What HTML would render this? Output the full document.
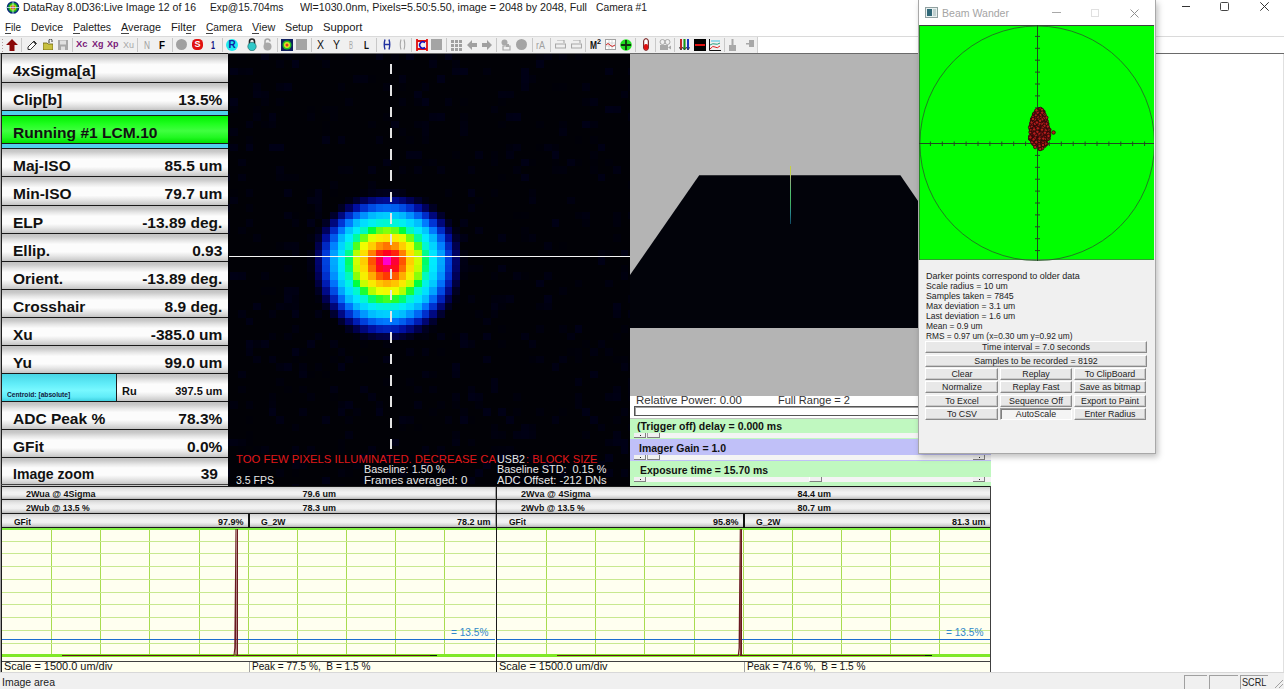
<!DOCTYPE html><html><head><meta charset="utf-8"><style>
html,body{margin:0;padding:0;}
body{width:1284px;height:689px;overflow:hidden;position:relative;background:#fff;font-family:"Liberation Sans",sans-serif;}
div,span,svg{box-sizing:border-box;}
.btn{position:absolute;left:2px;width:226px;background:linear-gradient(to bottom,#c2c2c2 0%,#cacaca 10%,#e8e8e8 25%,#fcfcfc 38%,#fcfcfc 66%,#e8e8e8 80%,#d4d4d4 92%,#c4c4c4 100%);}
.sbtn{position:absolute;background:linear-gradient(to bottom,#d0d0d0 0%,#e4e4e4 20%,#f2f2f2 45%,#f0f0f0 65%,#d8d8d8 85%,#b4b4b4 100%);}
.wb{position:absolute;background:#e6e6e6;border:1px solid #adadad;box-shadow:inset -1px -1px 0 #a0a0a0, inset 1px 1px 0 #fff;}
</style></head><body>

<svg style="position:absolute;left:6px;top:1px" width="14" height="13" viewBox="0 0 14 13">
<circle cx="7" cy="6.5" r="6.3" fill="#0a2a7a"/><circle cx="7" cy="6.5" r="4.8" fill="#18b020"/><circle cx="7" cy="6.5" r="3.2" fill="#a8e010"/><circle cx="7" cy="6.5" r="1.9" fill="#e02020"/>
<line x1="7" y1="0" x2="7" y2="13" stroke="#d0e8ff" stroke-width="0.8"/><line x1="0.5" y1="6.5" x2="13.5" y2="6.5" stroke="#d0e8ff" stroke-width="0.8"/></svg>
<span id="t_1" style="position:absolute;white-space:pre;line-height:10.5px;font-family:'Liberation Sans',sans-serif;font-size:10.5px;font-weight:normal;color:#1a1a1a;top:1.91px;left:23.00px;transform:scaleX(1.0013);transform-origin:left;">DataRay 8.0D36:Live Image 12 of 16</span>
<span id="t_2" style="position:absolute;white-space:pre;line-height:10.5px;font-family:'Liberation Sans',sans-serif;font-size:10.5px;font-weight:normal;color:#1a1a1a;top:1.91px;left:209.50px;transform:scaleX(0.9816);transform-origin:left;">Exp@15.704ms</span>
<span id="t_3" style="position:absolute;white-space:pre;line-height:10.5px;font-family:'Liberation Sans',sans-serif;font-size:10.5px;font-weight:normal;color:#1a1a1a;top:1.91px;left:300.00px;transform:scaleX(1.0190);transform-origin:left;">Wl=1030.0nm, Pixels=5.50:5.50, image = 2048 by 2048, Full</span>
<span id="t_4" style="position:absolute;white-space:pre;line-height:10.5px;font-family:'Liberation Sans',sans-serif;font-size:10.5px;font-weight:normal;color:#1a1a1a;top:1.91px;left:596.00px;transform:scaleX(0.9817);transform-origin:left;">Camera #1</span>
<div style="position:absolute;left:1182px;top:6px;width:8px;height:1px;background:#333;"></div>
<div style="position:absolute;left:1220px;top:2px;width:9px;height:9px;border:1px solid #444;border-radius:1.5px"></div>
<svg style="position:absolute;left:1260px;top:2px" width="9" height="9" viewBox="0 0 9 9"><path d="M0.3 0.3L8.7 8.7M8.7 0.3L0.3 8.7" stroke="#333" stroke-width="1"/></svg>
<span id="t_5" style="position:absolute;white-space:pre;line-height:11px;font-family:'Liberation Sans',sans-serif;font-size:11px;font-weight:normal;color:#1a1a1a;top:22.29px;left:5.00px;transform:scaleX(0.9022);transform-origin:left;">File</span>
<span id="t_6" style="position:absolute;white-space:pre;line-height:11px;font-family:'Liberation Sans',sans-serif;font-size:11px;font-weight:normal;color:#1a1a1a;top:22.29px;left:31.00px;transform:scaleX(0.9517);transform-origin:left;">Device</span>
<span id="t_7" style="position:absolute;white-space:pre;line-height:11px;font-family:'Liberation Sans',sans-serif;font-size:11px;font-weight:normal;color:#1a1a1a;top:22.29px;left:73.00px;transform:scaleX(0.9560);transform-origin:left;">Palettes</span>
<span id="t_8" style="position:absolute;white-space:pre;line-height:11px;font-family:'Liberation Sans',sans-serif;font-size:11px;font-weight:normal;color:#1a1a1a;top:22.29px;left:121.00px;transform:scaleX(0.9808);transform-origin:left;">Average</span>
<span id="t_9" style="position:absolute;white-space:pre;line-height:11px;font-family:'Liberation Sans',sans-serif;font-size:11px;font-weight:normal;color:#1a1a1a;top:22.29px;left:171.00px;transform:scaleX(1.0224);transform-origin:left;">Filter</span>
<span id="t_10" style="position:absolute;white-space:pre;line-height:11px;font-family:'Liberation Sans',sans-serif;font-size:11px;font-weight:normal;color:#1a1a1a;top:22.29px;left:205.60px;transform:scaleX(0.9227);transform-origin:left;">Camera</span>
<span id="t_11" style="position:absolute;white-space:pre;line-height:11px;font-family:'Liberation Sans',sans-serif;font-size:11px;font-weight:normal;color:#1a1a1a;top:22.29px;left:251.50px;transform:scaleX(0.9849);transform-origin:left;">View</span>
<span id="t_12" style="position:absolute;white-space:pre;line-height:11px;font-family:'Liberation Sans',sans-serif;font-size:11px;font-weight:normal;color:#1a1a1a;top:22.29px;left:284.50px;transform:scaleX(0.9739);transform-origin:left;">Setup</span>
<span id="t_13" style="position:absolute;white-space:pre;line-height:11px;font-family:'Liberation Sans',sans-serif;font-size:11px;font-weight:normal;color:#1a1a1a;top:22.29px;left:322.50px;transform:scaleX(1.0251);transform-origin:left;">Support</span>
<div style="position:absolute;left:5px;top:33px;width:6px;height:1px;background:#444;"></div>
<div style="position:absolute;left:73px;top:33px;width:7px;height:1px;background:#444;"></div>
<div style="position:absolute;left:121px;top:33px;width:8px;height:1px;background:#444;"></div>
<div style="position:absolute;left:186px;top:33px;width:5px;height:1px;background:#444;"></div>
<div style="position:absolute;left:205.6px;top:33px;width:7px;height:1px;background:#444;"></div>
<div style="position:absolute;left:251.5px;top:33px;width:7px;height:1px;background:#444;"></div>
<div style="position:absolute;left:0px;top:36px;width:1284px;height:1px;background:#dadada;"></div>
<div style="position:absolute;left:0px;top:37px;width:758px;height:16px;background:#f0f0f0;"></div>
<div style="position:absolute;left:757px;top:37px;width:1px;height:16px;background:#d0d0d0;"></div>
<div style="position:absolute;left:0px;top:53px;width:1284px;height:1px;background:#6a6a6a;"></div>
<div style="position:absolute;left:2px;top:39px;width:1px;height:1px;background:#b0a0a0;"></div>
<div style="position:absolute;left:2px;top:42px;width:1px;height:1px;background:#b0a0a0;"></div>
<div style="position:absolute;left:2px;top:45px;width:1px;height:1px;background:#b0a0a0;"></div>
<div style="position:absolute;left:2px;top:48px;width:1px;height:1px;background:#b0a0a0;"></div>
<div style="position:absolute;left:2px;top:51px;width:1px;height:1px;background:#b0a0a0;"></div>
<div style="position:absolute;left:21px;top:38px;width:1px;height:14px;background:#c8c8c8;"></div>
<div style="position:absolute;left:72px;top:38px;width:1px;height:14px;background:#c8c8c8;"></div>
<div style="position:absolute;left:137px;top:38px;width:1px;height:14px;background:#c8c8c8;"></div>
<div style="position:absolute;left:172px;top:38px;width:1px;height:14px;background:#c8c8c8;"></div>
<div style="position:absolute;left:222px;top:38px;width:1px;height:14px;background:#c8c8c8;"></div>
<div style="position:absolute;left:277px;top:38px;width:1px;height:14px;background:#c8c8c8;"></div>
<div style="position:absolute;left:311px;top:38px;width:1px;height:14px;background:#c8c8c8;"></div>
<div style="position:absolute;left:376px;top:38px;width:1px;height:14px;background:#c8c8c8;"></div>
<div style="position:absolute;left:411px;top:38px;width:1px;height:14px;background:#c8c8c8;"></div>
<div style="position:absolute;left:446px;top:38px;width:1px;height:14px;background:#c8c8c8;"></div>
<div style="position:absolute;left:496px;top:38px;width:1px;height:14px;background:#c8c8c8;"></div>
<div style="position:absolute;left:532px;top:38px;width:1px;height:14px;background:#c8c8c8;"></div>
<div style="position:absolute;left:550px;top:38px;width:1px;height:14px;background:#c8c8c8;"></div>
<div style="position:absolute;left:585px;top:38px;width:1px;height:14px;background:#c8c8c8;"></div>
<div style="position:absolute;left:635px;top:38px;width:1px;height:14px;background:#c8c8c8;"></div>
<div style="position:absolute;left:655px;top:38px;width:1px;height:14px;background:#c8c8c8;"></div>
<div style="position:absolute;left:674px;top:38px;width:1px;height:14px;background:#c8c8c8;"></div>
<div style="position:absolute;left:724px;top:38px;width:1px;height:14px;background:#c8c8c8;"></div>
<svg style="position:absolute;left:6px;top:39px" width="12" height="12" viewBox="0 0 12 12"><path d="M6 0L12 6H8.5V12H3.5V6H0Z" fill="#8a0a0a"/></svg>
<svg style="position:absolute;left:27px;top:40px" width="10" height="10" viewBox="0 0 10 10"><path d="M1 7L7 1L9.5 3.5L3.5 9.5H1Z" fill="#fff" stroke="#333" stroke-width="1"/><path d="M6 2L8.5 4.5L9.5 3.5L7 1Z" fill="#333"/></svg>
<svg style="position:absolute;left:43px;top:39px" width="10" height="11" viewBox="0 0 10 11"><path d="M0 4H4L5 5H10V11H0Z" fill="#c8c040" stroke="#6a6010" stroke-width="0.8"/><path d="M6 4V1.5A1.5 1.5 0 0 1 9 1.5V3" fill="none" stroke="#333" stroke-width="1"/></svg>
<svg style="position:absolute;left:58px;top:40px" width="10" height="10" viewBox="0 0 10 10"><rect x="0" y="0" width="10" height="10" fill="#a8a8a8"/><rect x="2" y="0.5" width="6" height="4" fill="#e0e0e0"/><rect x="3" y="6.5" width="4" height="3.5" fill="#e0e0e0"/></svg>
<span id="t_14" style="position:absolute;white-space:pre;line-height:9px;font-family:'Liberation Sans',sans-serif;font-size:9px;font-weight:bold;color:#7a1878;top:40.18px;left:76.00px;transform:scaleX(1.0440);transform-origin:left;">Xc</span>
<span id="t_15" style="position:absolute;white-space:pre;line-height:9px;font-family:'Liberation Sans',sans-serif;font-size:9px;font-weight:bold;color:#7a1878;top:40.18px;left:91.50px;transform:scaleX(0.9986);transform-origin:left;">Xg</span>
<span id="t_16" style="position:absolute;white-space:pre;line-height:9px;font-family:'Liberation Sans',sans-serif;font-size:9px;font-weight:bold;color:#7a1878;top:40.18px;left:107.00px;transform:scaleX(0.9986);transform-origin:left;">Xp</span>
<span id="t_17" style="position:absolute;white-space:pre;line-height:9.5px;font-family:'Liberation Sans',sans-serif;font-size:9.5px;font-weight:normal;color:#a8a8a8;top:39.76px;left:123.00px;transform:scaleX(0.9462);transform-origin:left;">Xu</span>
<span id="t_18" style="position:absolute;white-space:pre;line-height:11px;font-family:'Liberation Sans',sans-serif;font-size:11px;font-weight:normal;color:#a0a0a0;top:40.19px;left:144.00px;transform:scaleX(0.7544);transform-origin:left;">N</span>
<span id="t_19" style="position:absolute;white-space:pre;line-height:11px;font-family:'Liberation Sans',sans-serif;font-size:11px;font-weight:bold;color:#000;top:40.19px;left:159.00px;transform:scaleX(0.8910);transform-origin:left;">F</span>
<div style="position:absolute;left:176px;top:39px;width:11px;height:11px;border-radius:50%;background:#a0a0a0"></div>
<div style="position:absolute;left:192px;top:39px;width:11px;height:11px;border-radius:40%;background:#e01010;color:#fff;font:bold 9px/11px 'Liberation Sans',sans-serif;text-align:center">S</div>
<span id="t_20" style="position:absolute;white-space:pre;line-height:11px;font-family:'Liberation Sans',sans-serif;font-size:11px;font-weight:bold;color:#101080;top:40.19px;left:211.00px;transform:scaleX(0.6531);transform-origin:left;">1</span>
<div style="position:absolute;left:226px;top:39px;width:12px;height:12px;border-radius:50%;background:#20e8f0;color:#1020a0;font:bold 10px/12px 'Liberation Sans',sans-serif;text-align:center">R</div>
<svg style="position:absolute;left:247px;top:38px" width="10" height="13" viewBox="0 0 10 13"><path d="M2.5 6V3.5A2.5 2.5 0 0 1 7.5 3.5V6" fill="none" stroke="#222" stroke-width="1.6"/><circle cx="5" cy="8.5" r="4.2" fill="#30c8c8" stroke="#206060" stroke-width="0.6"/></svg>
<svg style="position:absolute;left:263px;top:38px" width="9" height="13" viewBox="0 0 9 13"><path d="M2 6V3.5A2.5 2.5 0 0 1 7 3.5" fill="none" stroke="#a8a8a8" stroke-width="1.6"/><circle cx="4.5" cy="8.5" r="4" fill="#a8a8a8"/></svg>
<svg style="position:absolute;left:281px;top:39px" width="12" height="12" viewBox="0 0 12 12"><rect width="12" height="12" fill="#102060"/><circle cx="6" cy="6" r="4.5" fill="#20c020"/><circle cx="6" cy="6" r="3" fill="#e0e020"/><circle cx="6" cy="6" r="1.5" fill="#e03030"/></svg>
<div style="position:absolute;left:296px;top:39px;width:11px;height:11px;background:#a4a4a4;"></div>
<span id="t_21" style="position:absolute;white-space:pre;line-height:12px;font-family:'Liberation Sans',sans-serif;font-size:12px;font-weight:normal;color:#111;top:39.34px;left:317.00px;transform:scaleX(0.8733);transform-origin:left;">X</span>
<span id="t_22" style="position:absolute;white-space:pre;line-height:12px;font-family:'Liberation Sans',sans-serif;font-size:12px;font-weight:normal;color:#111;top:39.34px;left:333.00px;transform:scaleX(0.8733);transform-origin:left;">Y</span>
<span id="t_23" style="position:absolute;white-space:pre;line-height:10px;font-family:'Liberation Sans',sans-serif;font-size:10px;font-weight:normal;color:#a8a8a8;top:41.04px;left:349.00px;transform:scaleX(0.5995);transform-origin:left;">B</span>
<span id="t_24" style="position:absolute;white-space:pre;line-height:11px;font-family:'Liberation Sans',sans-serif;font-size:11px;font-weight:bold;color:#111;top:40.19px;left:364.00px;transform:scaleX(0.7425);transform-origin:left;">L</span>
<svg style="position:absolute;left:383px;top:39px" width="8" height="11" viewBox="0 0 8 11"><path d="M2 0.5Q0.5 5.5 2 10.5M6 0.5Q7.5 5.5 6 10.5M1 5.5H7" fill="none" stroke="#2030a0" stroke-width="1.4"/></svg>
<svg style="position:absolute;left:399px;top:39px" width="7" height="11" viewBox="0 0 7 11"><path d="M2 0.5Q0.5 5.5 2 10.5M5 0.5Q6.5 5.5 5 10.5" fill="none" stroke="#a8a8a8" stroke-width="1.1"/></svg>
<svg style="position:absolute;left:416px;top:39px" width="12" height="12" viewBox="0 0 12 12"><path d="M1 0V12M11 0V12M1 2H11M1 10H11" stroke="#e01010" stroke-width="1.8"/><path d="M9 3.5Q6 1.5 4 4.5Q3 6 4 7.5Q6 10.5 9 8.5" fill="none" stroke="#1010c0" stroke-width="1.6"/></svg>
<div style="position:absolute;left:431px;top:39px;width:11px;height:11px;background:#a4a4a4;"></div>
<div style="position:absolute;left:451px;top:40px;width:3px;height:3px;background:#a0a0a0;"></div>
<div style="position:absolute;left:451px;top:44px;width:3px;height:3px;background:#a0a0a0;"></div>
<div style="position:absolute;left:451px;top:48px;width:3px;height:3px;background:#a0a0a0;"></div>
<div style="position:absolute;left:455px;top:40px;width:3px;height:3px;background:#a0a0a0;"></div>
<div style="position:absolute;left:455px;top:44px;width:3px;height:3px;background:#a0a0a0;"></div>
<div style="position:absolute;left:455px;top:48px;width:3px;height:3px;background:#a0a0a0;"></div>
<div style="position:absolute;left:459px;top:40px;width:3px;height:3px;background:#a0a0a0;"></div>
<div style="position:absolute;left:459px;top:44px;width:3px;height:3px;background:#a0a0a0;"></div>
<div style="position:absolute;left:459px;top:48px;width:3px;height:3px;background:#a0a0a0;"></div>
<svg style="position:absolute;left:467px;top:40px" width="10" height="10" viewBox="0 0 10 10"><path d="M0 5L5 0V3H10V7H5V10Z" fill="#a0a0a0"/></svg>
<svg style="position:absolute;left:482px;top:40px" width="10" height="10" viewBox="0 0 10 10"><path d="M10 5L5 0V3H0V7H5V10Z" fill="#a0a0a0"/></svg>
<svg style="position:absolute;left:501px;top:39px" width="11" height="12" viewBox="0 0 11 12"><circle cx="3.5" cy="3.5" r="3" fill="#a8a8a8"/><path d="M2 7H9V11H2Z" fill="none" stroke="#a8a8a8" stroke-width="1.2"/><rect x="5" y="5" width="3" height="3" fill="#a8a8a8"/></svg>
<div style="position:absolute;left:516px;top:39px;width:11px;height:11px;border-radius:50%;background:#a4a4a4"></div>
<span id="t_25" style="position:absolute;white-space:pre;line-height:10px;font-family:'Liberation Sans',sans-serif;font-size:10px;font-weight:normal;color:#a0a0a0;top:40.54px;left:536.00px;transform:scaleX(0.9000);transform-origin:left;">rA</span>
<svg style="position:absolute;left:555px;top:40px" width="11" height="10" viewBox="0 0 11 10"><path d="M2 0H9V3M0.5 4H10.5V8H0.5Z" fill="none" stroke="#a8a8a8" stroke-width="1.1"/></svg>
<svg style="position:absolute;left:571px;top:40px" width="11" height="10" viewBox="0 0 11 10"><path d="M2 0H9V3M0.5 4H10.5V8H0.5Z" fill="none" stroke="#a8a8a8" stroke-width="1.1"/></svg>
<span id="t_26" style="position:absolute;white-space:pre;line-height:10px;font-family:'Liberation Sans',sans-serif;font-size:10px;font-weight:bold;color:#111;top:41.04px;left:590.00px;transform:scaleX(0.8390);transform-origin:left;">M</span>
<span id="t_27" style="position:absolute;white-space:pre;line-height:8px;font-family:'Liberation Sans',sans-serif;font-size:8px;font-weight:bold;color:#111;top:38.23px;left:597.00px;transform:scaleX(0.8982);transform-origin:left;">2</span>
<svg style="position:absolute;left:605px;top:39px" width="11" height="11" viewBox="0 0 11 11"><rect x="0.5" y="0.5" width="10" height="10" fill="#fff" stroke="#a0a0a0"/><path d="M0.5 4H10.5M0.5 7H10.5M4 0.5V10.5M7 0.5V10.5" stroke="#c0c0c0" stroke-width="0.6"/><path d="M1 6Q3 3 5 6T10 6" fill="none" stroke="#d02020" stroke-width="1"/></svg>
<svg style="position:absolute;left:620px;top:39px" width="12" height="12" viewBox="0 0 12 12"><circle cx="6" cy="6" r="5.8" fill="#20e020"/><path d="M6 1V11M1 6H11" stroke="#103010" stroke-width="1.8"/></svg>
<svg style="position:absolute;left:643px;top:38px" width="6" height="13" viewBox="0 0 6 13"><rect x="0.7" y="0.7" width="4.6" height="11.6" rx="2.3" fill="#fff" stroke="#600" stroke-width="1"/><rect x="1" y="6" width="4" height="6" rx="1.8" fill="#e01010"/></svg>
<svg style="position:absolute;left:659px;top:39px" width="12" height="12" viewBox="0 0 12 12"><circle cx="3.5" cy="3" r="2.5" fill="none" stroke="#a8a8a8"/><circle cx="8.5" cy="3" r="2.5" fill="none" stroke="#a8a8a8"/><rect x="1" y="6" width="8" height="5" fill="#a8a8a8"/><path d="M9 8.5L12 6.5V10.5Z" fill="#a8a8a8"/></svg>
<svg style="position:absolute;left:679px;top:39px" width="11" height="12" viewBox="0 0 11 12"><path d="M2 0V10M5.5 0V10M9 0V10" stroke-width="1.5" stroke="#000"/><path d="M2 0V11" stroke="#e02020" stroke-width="1.6"/><path d="M5.5 0V11" stroke="#10a010" stroke-width="1.6"/><path d="M9 0V11" stroke="#1030e0" stroke-width="1.6"/><path d="M0 8L2 11L4 8M3.5 8L5.5 11L7.5 8M7 8L9 11L11 8" fill="none" stroke="#333" stroke-width="0.8"/></svg>
<svg style="position:absolute;left:694px;top:39px" width="12" height="12" viewBox="0 0 12 12"><rect width="12" height="12" fill="#000"/><rect x="1" y="5" width="10" height="2" fill="#e01010"/></svg>
<svg style="position:absolute;left:709px;top:39px" width="12" height="12" viewBox="0 0 12 12"><path d="M0.5 0V11.5H12" fill="none" stroke="#111" stroke-width="1"/><path d="M1 10Q4 6 6 8T11 7" fill="none" stroke="#e02020" stroke-width="1"/><path d="M1 6Q4 4 6 5T11 4" fill="none" stroke="#20a080" stroke-width="1"/><path d="M2 2H11" stroke="#40c0e0" stroke-width="1"/></svg>
<svg style="position:absolute;left:729px;top:39px" width="7" height="12" viewBox="0 0 7 12"><rect x="2.5" y="0" width="2" height="6" fill="#a8a8a8"/><rect x="0" y="6" width="7" height="6" fill="#a8a8a8"/></svg>
<svg style="position:absolute;left:746px;top:40px" width="8" height="8" viewBox="0 0 8 8"><rect x="3" y="0" width="5" height="7" fill="#a8a8a8"/><rect x="0" y="3" width="3" height="1.5" fill="#a8a8a8"/></svg>
<div style="position:absolute;left:0px;top:54px;width:228px;height:432px;background:#a8a8a8;"></div>
<div style="position:absolute;left:1px;top:54px;width:1px;height:432px;background:#1e1e1e;"></div>
<div class="btn" style="top:54px;height:28px"></div>
<div class="btn" style="top:83px;height:27px"></div>
<div class="btn" style="top:149px;height:27px"></div>
<div class="btn" style="top:177px;height:28px"></div>
<div class="btn" style="top:206px;height:27px"></div>
<div class="btn" style="top:234px;height:27px"></div>
<div class="btn" style="top:262px;height:27px"></div>
<div class="btn" style="top:290px;height:27px"></div>
<div class="btn" style="top:318px;height:27px"></div>
<div class="btn" style="top:346px;height:27px"></div>
<div class="btn" style="top:402px;height:27px"></div>
<div class="btn" style="top:430px;height:27px"></div>
<div class="btn" style="top:458px;height:26px"></div>
<div style="position:absolute;left:1px;top:53px;width:227px;height:1px;background:#1a1a1a;"></div>
<div style="position:absolute;left:1px;top:82px;width:227px;height:1px;background:#1a1a1a;"></div>
<div style="position:absolute;left:1px;top:110px;width:227px;height:1px;background:#1a1a1a;"></div>
<div style="position:absolute;left:1px;top:115px;width:227px;height:1px;background:#1a1a1a;"></div>
<div style="position:absolute;left:1px;top:143px;width:227px;height:1px;background:#1a1a1a;"></div>
<div style="position:absolute;left:1px;top:148px;width:227px;height:1px;background:#1a1a1a;"></div>
<div style="position:absolute;left:1px;top:176px;width:227px;height:1px;background:#1a1a1a;"></div>
<div style="position:absolute;left:1px;top:205px;width:227px;height:1px;background:#1a1a1a;"></div>
<div style="position:absolute;left:1px;top:233px;width:227px;height:1px;background:#1a1a1a;"></div>
<div style="position:absolute;left:1px;top:261px;width:227px;height:1px;background:#1a1a1a;"></div>
<div style="position:absolute;left:1px;top:289px;width:227px;height:1px;background:#1a1a1a;"></div>
<div style="position:absolute;left:1px;top:317px;width:227px;height:1px;background:#1a1a1a;"></div>
<div style="position:absolute;left:1px;top:345px;width:227px;height:1px;background:#1a1a1a;"></div>
<div style="position:absolute;left:1px;top:373px;width:227px;height:1px;background:#1a1a1a;"></div>
<div style="position:absolute;left:1px;top:401px;width:227px;height:1px;background:#1a1a1a;"></div>
<div style="position:absolute;left:1px;top:429px;width:227px;height:1px;background:#1a1a1a;"></div>
<div style="position:absolute;left:1px;top:457px;width:227px;height:1px;background:#1a1a1a;"></div>
<div style="position:absolute;left:1px;top:486px;width:227px;height:1px;background:#1a1a1a;"></div>
<div style="position:absolute;left:1px;top:484px;width:227px;height:1px;background:#404040;"></div>
<div style="position:absolute;left:2px;top:485px;width:226px;height:1px;background:#c8c8c8;"></div>
<div style="position:absolute;left:2px;top:111px;width:226px;height:4px;background:#50d0ec;"></div>
<div style="position:absolute;left:2px;top:144px;width:226px;height:4px;background:#50d0ec;"></div>
<div style="position:absolute;left:2px;top:116px;width:226px;height:27px;background:linear-gradient(to bottom,#00f000 0%,#20ff20 30%,#40ff40 55%,#20f820 80%,#00e000 100%)"></div>
<div style="position:absolute;left:2px;top:374px;width:114px;height:27px;background:linear-gradient(to bottom,#48d4e4 0%,#60ecf8 35%,#78f8ff 60%,#60ecf8 85%,#40d0e0 100%)"></div>
<div class="btn" style="left:117px;width:111px;top:374px;height:27px"></div>
<div style="position:absolute;left:116px;top:373px;width:1px;height:28px;background:#1a1a1a;"></div>
<span id="t_28" style="position:absolute;white-space:pre;line-height:8px;font-family:'Liberation Sans',sans-serif;font-size:8px;font-weight:bold;color:#102040;top:390.73px;left:6.80px;transform:scaleX(0.8316);transform-origin:left;">Centroid: [absolute]</span>
<span id="t_29" style="position:absolute;white-space:pre;line-height:11px;font-family:'Liberation Sans',sans-serif;font-size:11px;font-weight:bold;color:#111;top:386.19px;left:122.00px;">Ru</span>
<span id="t_30" style="position:absolute;white-space:pre;line-height:11px;font-family:'Liberation Sans',sans-serif;font-size:11px;font-weight:bold;color:#111;top:386.49px;right:1061.70px;">397.5 um</span>
<span id="t_31" style="position:absolute;white-space:pre;line-height:15.5px;font-family:'Liberation Sans',sans-serif;font-size:15.5px;font-weight:bold;color:#111;top:63.28px;left:13.00px;">4xSigma[a]</span>
<span id="t_32" style="position:absolute;white-space:pre;line-height:15.5px;font-family:'Liberation Sans',sans-serif;font-size:15.5px;font-weight:bold;color:#111;top:92.28px;left:13.00px;">Clip[b]</span>
<span id="t_33" style="position:absolute;white-space:pre;line-height:15.5px;font-family:'Liberation Sans',sans-serif;font-size:15.5px;font-weight:bold;color:#111;top:92.28px;right:1061.70px;">13.5%</span>
<span id="t_34" style="position:absolute;white-space:pre;line-height:15.5px;font-family:'Liberation Sans',sans-serif;font-size:15.5px;font-weight:bold;color:#111;top:158.28px;left:13.00px;">Maj-ISO</span>
<span id="t_35" style="position:absolute;white-space:pre;line-height:15.5px;font-family:'Liberation Sans',sans-serif;font-size:15.5px;font-weight:bold;color:#111;top:158.28px;right:1061.70px;">85.5 um</span>
<span id="t_36" style="position:absolute;white-space:pre;line-height:15.5px;font-family:'Liberation Sans',sans-serif;font-size:15.5px;font-weight:bold;color:#111;top:186.28px;left:13.00px;">Min-ISO</span>
<span id="t_37" style="position:absolute;white-space:pre;line-height:15.5px;font-family:'Liberation Sans',sans-serif;font-size:15.5px;font-weight:bold;color:#111;top:186.28px;right:1061.70px;">79.7 um</span>
<span id="t_38" style="position:absolute;white-space:pre;line-height:15.5px;font-family:'Liberation Sans',sans-serif;font-size:15.5px;font-weight:bold;color:#111;top:215.28px;left:13.00px;">ELP</span>
<span id="t_39" style="position:absolute;white-space:pre;line-height:15.5px;font-family:'Liberation Sans',sans-serif;font-size:15.5px;font-weight:bold;color:#111;top:215.28px;right:1061.70px;">-13.89 deg.</span>
<span id="t_40" style="position:absolute;white-space:pre;line-height:15.5px;font-family:'Liberation Sans',sans-serif;font-size:15.5px;font-weight:bold;color:#111;top:243.28px;left:13.00px;">Ellip.</span>
<span id="t_41" style="position:absolute;white-space:pre;line-height:15.5px;font-family:'Liberation Sans',sans-serif;font-size:15.5px;font-weight:bold;color:#111;top:243.28px;right:1061.70px;">0.93</span>
<span id="t_42" style="position:absolute;white-space:pre;line-height:15.5px;font-family:'Liberation Sans',sans-serif;font-size:15.5px;font-weight:bold;color:#111;top:271.28px;left:13.00px;">Orient.</span>
<span id="t_43" style="position:absolute;white-space:pre;line-height:15.5px;font-family:'Liberation Sans',sans-serif;font-size:15.5px;font-weight:bold;color:#111;top:271.28px;right:1061.70px;">-13.89 deg.</span>
<span id="t_44" style="position:absolute;white-space:pre;line-height:15.5px;font-family:'Liberation Sans',sans-serif;font-size:15.5px;font-weight:bold;color:#111;top:299.28px;left:13.00px;">Crosshair</span>
<span id="t_45" style="position:absolute;white-space:pre;line-height:15.5px;font-family:'Liberation Sans',sans-serif;font-size:15.5px;font-weight:bold;color:#111;top:299.28px;right:1061.70px;">8.9 deg.</span>
<span id="t_46" style="position:absolute;white-space:pre;line-height:15.5px;font-family:'Liberation Sans',sans-serif;font-size:15.5px;font-weight:bold;color:#111;top:327.28px;left:13.00px;">Xu</span>
<span id="t_47" style="position:absolute;white-space:pre;line-height:15.5px;font-family:'Liberation Sans',sans-serif;font-size:15.5px;font-weight:bold;color:#111;top:327.28px;right:1061.70px;">-385.0 um</span>
<span id="t_48" style="position:absolute;white-space:pre;line-height:15.5px;font-family:'Liberation Sans',sans-serif;font-size:15.5px;font-weight:bold;color:#111;top:355.28px;left:13.00px;">Yu</span>
<span id="t_49" style="position:absolute;white-space:pre;line-height:15.5px;font-family:'Liberation Sans',sans-serif;font-size:15.5px;font-weight:bold;color:#111;top:355.28px;right:1061.70px;">99.0 um</span>
<span id="t_50" style="position:absolute;white-space:pre;line-height:15.5px;font-family:'Liberation Sans',sans-serif;font-size:15.5px;font-weight:bold;color:#111;top:411.28px;left:13.00px;">ADC Peak %</span>
<span id="t_51" style="position:absolute;white-space:pre;line-height:15.5px;font-family:'Liberation Sans',sans-serif;font-size:15.5px;font-weight:bold;color:#111;top:411.28px;right:1061.70px;">78.3%</span>
<span id="t_52" style="position:absolute;white-space:pre;line-height:15.5px;font-family:'Liberation Sans',sans-serif;font-size:15.5px;font-weight:bold;color:#111;top:439.28px;left:13.00px;">GFit</span>
<span id="t_53" style="position:absolute;white-space:pre;line-height:15.5px;font-family:'Liberation Sans',sans-serif;font-size:15.5px;font-weight:bold;color:#111;top:439.28px;right:1061.70px;">0.0%</span>
<span id="t_54" style="position:absolute;white-space:pre;line-height:15.5px;font-family:'Liberation Sans',sans-serif;font-size:15.5px;font-weight:bold;color:#111;top:466.38px;left:13.00px;transform:scaleX(0.9076);transform-origin:left;">Image zoom</span>
<span id="t_55" style="position:absolute;white-space:pre;line-height:15.5px;font-family:'Liberation Sans',sans-serif;font-size:15.5px;font-weight:bold;color:#111;top:466.38px;right:1066.00px;">39</span>
<span id="t_56" style="position:absolute;white-space:pre;line-height:15.5px;font-family:'Liberation Sans',sans-serif;font-size:15.5px;font-weight:bold;color:#111;top:125.38px;left:13.00px;transform:scaleX(1.0047);transform-origin:left;">Running #1 LCM.10</span>
<div style="position:absolute;left:228px;top:54px;width:402px;height:432px;background:#010106;"></div>
<svg style="position:absolute;left:228px;top:54px" width="402" height="432" viewBox="228 54 402 432" shape-rendering="crispEdges"><rect x="222.75" y="90.55" width="7.70" height="7.62" fill="#000008"/><rect x="222.75" y="173.82" width="7.70" height="7.62" fill="#000016"/><rect x="222.75" y="204.10" width="7.70" height="7.62" fill="#000014"/><rect x="222.75" y="219.24" width="7.70" height="7.62" fill="#000014"/><rect x="222.75" y="226.81" width="7.70" height="7.62" fill="#000015"/><rect x="222.75" y="302.51" width="7.70" height="7.62" fill="#00000d"/><rect x="222.75" y="310.08" width="7.70" height="7.62" fill="#00000a"/><rect x="222.75" y="416.06" width="7.70" height="7.62" fill="#00000c"/><rect x="222.75" y="438.77" width="7.70" height="7.62" fill="#000015"/><rect x="222.75" y="469.05" width="7.70" height="7.62" fill="#000012"/><rect x="230.40" y="67.84" width="7.70" height="7.62" fill="#000015"/><rect x="230.40" y="98.12" width="7.70" height="7.62" fill="#000016"/><rect x="230.40" y="105.69" width="7.70" height="7.62" fill="#00000c"/><rect x="230.40" y="128.40" width="7.70" height="7.62" fill="#000011"/><rect x="230.40" y="143.54" width="7.70" height="7.62" fill="#000013"/><rect x="230.40" y="188.96" width="7.70" height="7.62" fill="#000008"/><rect x="230.40" y="196.53" width="7.70" height="7.62" fill="#000011"/><rect x="230.40" y="272.23" width="7.70" height="7.62" fill="#000015"/><rect x="230.40" y="400.92" width="7.70" height="7.62" fill="#00000e"/><rect x="230.40" y="438.77" width="7.70" height="7.62" fill="#000012"/><rect x="238.05" y="52.70" width="7.70" height="7.62" fill="#000008"/><rect x="238.05" y="67.84" width="7.70" height="7.62" fill="#00000d"/><rect x="238.05" y="158.68" width="7.70" height="7.62" fill="#000011"/><rect x="238.05" y="173.82" width="7.70" height="7.62" fill="#000010"/><rect x="238.05" y="226.81" width="7.70" height="7.62" fill="#00000d"/><rect x="238.05" y="272.23" width="7.70" height="7.62" fill="#000013"/><rect x="238.05" y="310.08" width="7.70" height="7.62" fill="#000010"/><rect x="238.05" y="370.64" width="7.70" height="7.62" fill="#000011"/><rect x="238.05" y="385.78" width="7.70" height="7.62" fill="#00000c"/><rect x="238.05" y="438.77" width="7.70" height="7.62" fill="#00000e"/><rect x="238.05" y="446.34" width="7.70" height="7.62" fill="#000008"/><rect x="245.70" y="67.84" width="7.70" height="7.62" fill="#00000f"/><rect x="245.70" y="120.83" width="7.70" height="7.62" fill="#000011"/><rect x="245.70" y="135.97" width="7.70" height="7.62" fill="#00000b"/><rect x="245.70" y="143.54" width="7.70" height="7.62" fill="#000016"/><rect x="245.70" y="188.96" width="7.70" height="7.62" fill="#00000f"/><rect x="245.70" y="204.10" width="7.70" height="7.62" fill="#00000c"/><rect x="245.70" y="219.24" width="7.70" height="7.62" fill="#000010"/><rect x="245.70" y="317.65" width="7.70" height="7.62" fill="#000014"/><rect x="245.70" y="340.36" width="7.70" height="7.62" fill="#000016"/><rect x="245.70" y="347.93" width="7.70" height="7.62" fill="#000012"/><rect x="245.70" y="400.92" width="7.70" height="7.62" fill="#00000d"/><rect x="245.70" y="416.06" width="7.70" height="7.62" fill="#000008"/><rect x="245.70" y="431.20" width="7.70" height="7.62" fill="#000008"/><rect x="245.70" y="438.77" width="7.70" height="7.62" fill="#000008"/><rect x="245.70" y="453.91" width="7.70" height="7.62" fill="#000010"/><rect x="245.70" y="469.05" width="7.70" height="7.62" fill="#000009"/><rect x="253.35" y="82.98" width="7.70" height="7.62" fill="#000010"/><rect x="253.35" y="90.55" width="7.70" height="7.62" fill="#000013"/><rect x="253.35" y="105.69" width="7.70" height="7.62" fill="#00000a"/><rect x="253.35" y="113.26" width="7.70" height="7.62" fill="#00000f"/><rect x="253.35" y="234.38" width="7.70" height="7.62" fill="#00000e"/><rect x="253.35" y="249.52" width="7.70" height="7.62" fill="#000008"/><rect x="253.35" y="302.51" width="7.70" height="7.62" fill="#000015"/><rect x="253.35" y="340.36" width="7.70" height="7.62" fill="#00000d"/><rect x="253.35" y="355.50" width="7.70" height="7.62" fill="#000011"/><rect x="253.35" y="446.34" width="7.70" height="7.62" fill="#000009"/><rect x="261.00" y="52.70" width="7.70" height="7.62" fill="#000014"/><rect x="261.00" y="90.55" width="7.70" height="7.62" fill="#000010"/><rect x="261.00" y="98.12" width="7.70" height="7.62" fill="#00000d"/><rect x="261.00" y="120.83" width="7.70" height="7.62" fill="#00000a"/><rect x="261.00" y="272.23" width="7.70" height="7.62" fill="#00000e"/><rect x="261.00" y="287.37" width="7.70" height="7.62" fill="#000009"/><rect x="261.00" y="340.36" width="7.70" height="7.62" fill="#000014"/><rect x="261.00" y="446.34" width="7.70" height="7.62" fill="#00000f"/><rect x="268.65" y="113.26" width="7.70" height="7.62" fill="#000013"/><rect x="268.65" y="120.83" width="7.70" height="7.62" fill="#00000e"/><rect x="268.65" y="143.54" width="7.70" height="7.62" fill="#000016"/><rect x="268.65" y="287.37" width="7.70" height="7.62" fill="#000009"/><rect x="268.65" y="310.08" width="7.70" height="7.62" fill="#00000f"/><rect x="268.65" y="332.79" width="7.70" height="7.62" fill="#00000d"/><rect x="268.65" y="355.50" width="7.70" height="7.62" fill="#000012"/><rect x="268.65" y="393.35" width="7.70" height="7.62" fill="#00000c"/><rect x="268.65" y="400.92" width="7.70" height="7.62" fill="#00000e"/><rect x="268.65" y="408.49" width="7.70" height="7.62" fill="#000016"/><rect x="276.30" y="60.27" width="7.70" height="7.62" fill="#00000d"/><rect x="276.30" y="82.98" width="7.70" height="7.62" fill="#00000f"/><rect x="276.30" y="98.12" width="7.70" height="7.62" fill="#00000c"/><rect x="276.30" y="143.54" width="7.70" height="7.62" fill="#000016"/><rect x="276.30" y="166.25" width="7.70" height="7.62" fill="#000010"/><rect x="276.30" y="173.82" width="7.70" height="7.62" fill="#00000d"/><rect x="276.30" y="241.95" width="7.70" height="7.62" fill="#00000a"/><rect x="276.30" y="302.51" width="7.70" height="7.62" fill="#000010"/><rect x="276.30" y="363.07" width="7.70" height="7.62" fill="#00000f"/><rect x="276.30" y="378.21" width="7.70" height="7.62" fill="#00000c"/><rect x="276.30" y="416.06" width="7.70" height="7.62" fill="#000013"/><rect x="276.30" y="469.05" width="7.70" height="7.62" fill="#00000e"/><rect x="283.95" y="52.70" width="7.70" height="7.62" fill="#00000a"/><rect x="283.95" y="82.98" width="7.70" height="7.62" fill="#000014"/><rect x="283.95" y="173.82" width="7.70" height="7.62" fill="#00000b"/><rect x="283.95" y="188.96" width="7.70" height="7.62" fill="#000014"/><rect x="283.95" y="211.67" width="7.70" height="7.62" fill="#000012"/><rect x="283.95" y="241.95" width="7.70" height="7.62" fill="#000010"/><rect x="283.95" y="264.66" width="7.70" height="7.62" fill="#00000c"/><rect x="283.95" y="287.37" width="7.70" height="7.62" fill="#000014"/><rect x="283.95" y="294.94" width="7.70" height="7.62" fill="#000016"/><rect x="283.95" y="302.51" width="7.70" height="7.62" fill="#00000d"/><rect x="283.95" y="332.79" width="7.70" height="7.62" fill="#00000d"/><rect x="283.95" y="363.07" width="7.70" height="7.62" fill="#000015"/><rect x="283.95" y="385.78" width="7.70" height="7.62" fill="#000009"/><rect x="283.95" y="453.91" width="7.70" height="7.62" fill="#000008"/><rect x="291.60" y="60.27" width="7.70" height="7.62" fill="#000015"/><rect x="291.60" y="173.82" width="7.70" height="7.62" fill="#00000b"/><rect x="291.60" y="211.67" width="7.70" height="7.62" fill="#000008"/><rect x="291.60" y="219.24" width="7.70" height="7.62" fill="#00000e"/><rect x="291.60" y="241.95" width="7.70" height="7.62" fill="#000011"/><rect x="291.60" y="249.52" width="7.70" height="7.62" fill="#00000f"/><rect x="291.60" y="287.37" width="7.70" height="7.62" fill="#000013"/><rect x="291.60" y="294.94" width="7.70" height="7.62" fill="#00000e"/><rect x="291.60" y="302.51" width="7.70" height="7.62" fill="#00000f"/><rect x="291.60" y="310.08" width="7.70" height="7.62" fill="#000016"/><rect x="291.60" y="325.22" width="7.70" height="7.62" fill="#00000f"/><rect x="291.60" y="347.93" width="7.70" height="7.62" fill="#000016"/><rect x="291.60" y="355.50" width="7.70" height="7.62" fill="#000008"/><rect x="291.60" y="423.63" width="7.70" height="7.62" fill="#00000d"/><rect x="291.60" y="446.34" width="7.70" height="7.62" fill="#000012"/><rect x="291.60" y="461.48" width="7.70" height="7.62" fill="#000011"/><rect x="291.60" y="469.05" width="7.70" height="7.62" fill="#000008"/><rect x="291.60" y="484.19" width="7.70" height="7.62" fill="#000010"/><rect x="299.25" y="52.70" width="7.70" height="7.62" fill="#000008"/><rect x="299.25" y="347.93" width="7.70" height="7.62" fill="#00000a"/><rect x="299.25" y="363.07" width="7.70" height="7.62" fill="#00000f"/><rect x="299.25" y="370.64" width="7.70" height="7.62" fill="#000013"/><rect x="299.25" y="385.78" width="7.70" height="7.62" fill="#00000b"/><rect x="299.25" y="408.49" width="7.70" height="7.62" fill="#000011"/><rect x="299.25" y="461.48" width="7.70" height="7.62" fill="#00000e"/><rect x="306.90" y="105.69" width="7.70" height="7.62" fill="#000008"/><rect x="306.90" y="113.26" width="7.70" height="7.62" fill="#00000c"/><rect x="306.90" y="188.96" width="7.70" height="7.62" fill="#000009"/><rect x="306.90" y="196.53" width="7.70" height="7.62" fill="#000014"/><rect x="306.90" y="204.10" width="7.70" height="7.62" fill="#000008"/><rect x="306.90" y="219.24" width="7.70" height="7.62" fill="#000016"/><rect x="306.90" y="234.38" width="7.70" height="7.62" fill="#00000e"/><rect x="306.90" y="249.52" width="7.70" height="7.62" fill="#000011"/><rect x="306.90" y="257.09" width="7.70" height="7.62" fill="#000014"/><rect x="306.90" y="264.66" width="7.70" height="7.62" fill="#000012"/><rect x="306.90" y="272.23" width="7.70" height="7.62" fill="#00000c"/><rect x="306.90" y="340.36" width="7.70" height="7.62" fill="#000015"/><rect x="306.90" y="370.64" width="7.70" height="7.62" fill="#000008"/><rect x="306.90" y="393.35" width="7.70" height="7.62" fill="#00000d"/><rect x="306.90" y="446.34" width="7.70" height="7.62" fill="#000010"/><rect x="314.55" y="52.70" width="7.70" height="7.62" fill="#00000b"/><rect x="314.55" y="188.96" width="7.70" height="7.62" fill="#000016"/><rect x="314.55" y="196.53" width="7.70" height="7.62" fill="#000016"/><rect x="314.55" y="204.10" width="7.70" height="7.62" fill="#000013"/><rect x="314.55" y="211.67" width="7.70" height="7.62" fill="#000010"/><rect x="314.55" y="226.81" width="7.70" height="7.62" fill="#000013"/><rect x="314.55" y="234.38" width="7.70" height="7.62" fill="#00002c"/><rect x="314.55" y="241.95" width="7.70" height="7.62" fill="#00004d"/><rect x="314.55" y="249.52" width="7.70" height="7.62" fill="#000264"/><rect x="314.55" y="257.09" width="7.70" height="7.62" fill="#00046f"/><rect x="314.55" y="264.66" width="7.70" height="7.62" fill="#000369"/><rect x="314.55" y="272.23" width="7.70" height="7.62" fill="#000057"/><rect x="314.55" y="279.80" width="7.70" height="7.62" fill="#000040"/><rect x="314.55" y="287.37" width="7.70" height="7.62" fill="#000022"/><rect x="314.55" y="294.94" width="7.70" height="7.62" fill="#00000e"/><rect x="314.55" y="310.08" width="7.70" height="7.62" fill="#000013"/><rect x="314.55" y="332.79" width="7.70" height="7.62" fill="#00000f"/><rect x="314.55" y="363.07" width="7.70" height="7.62" fill="#00000c"/><rect x="322.20" y="60.27" width="7.70" height="7.62" fill="#00000d"/><rect x="322.20" y="105.69" width="7.70" height="7.62" fill="#00000a"/><rect x="322.20" y="120.83" width="7.70" height="7.62" fill="#000008"/><rect x="322.20" y="128.40" width="7.70" height="7.62" fill="#000008"/><rect x="322.20" y="135.97" width="7.70" height="7.62" fill="#000014"/><rect x="322.20" y="219.24" width="7.70" height="7.62" fill="#000023"/><rect x="322.20" y="226.81" width="7.70" height="7.62" fill="#00015d"/><rect x="322.20" y="234.38" width="7.70" height="7.62" fill="#000e9c"/><rect x="322.20" y="241.95" width="7.70" height="7.62" fill="#0028c2"/><rect x="322.20" y="249.52" width="7.70" height="7.62" fill="#0039d8"/><rect x="322.20" y="257.09" width="7.70" height="7.62" fill="#0042de"/><rect x="322.20" y="264.66" width="7.70" height="7.62" fill="#003ddb"/><rect x="322.20" y="272.23" width="7.70" height="7.62" fill="#0030cd"/><rect x="322.20" y="279.80" width="7.70" height="7.62" fill="#001cb2"/><rect x="322.20" y="287.37" width="7.70" height="7.62" fill="#000a88"/><rect x="322.20" y="294.94" width="7.70" height="7.62" fill="#000051"/><rect x="322.20" y="302.51" width="7.70" height="7.62" fill="#000021"/><rect x="322.20" y="370.64" width="7.70" height="7.62" fill="#000008"/><rect x="322.20" y="416.06" width="7.70" height="7.62" fill="#000014"/><rect x="322.20" y="453.91" width="7.70" height="7.62" fill="#000008"/><rect x="322.20" y="461.48" width="7.70" height="7.62" fill="#000008"/><rect x="322.20" y="476.62" width="7.70" height="7.62" fill="#000015"/><rect x="329.85" y="105.69" width="7.70" height="7.62" fill="#00000a"/><rect x="329.85" y="113.26" width="7.70" height="7.62" fill="#00000a"/><rect x="329.85" y="181.39" width="7.70" height="7.62" fill="#00000d"/><rect x="329.85" y="188.96" width="7.70" height="7.62" fill="#000008"/><rect x="329.85" y="211.67" width="7.70" height="7.62" fill="#00002c"/><rect x="329.85" y="219.24" width="7.70" height="7.62" fill="#00087d"/><rect x="329.85" y="226.81" width="7.70" height="7.62" fill="#002bc6"/><rect x="329.85" y="234.38" width="7.70" height="7.62" fill="#005bed"/><rect x="329.85" y="241.95" width="7.70" height="7.62" fill="#0083ff"/><rect x="329.85" y="249.52" width="7.70" height="7.62" fill="#009eff"/><rect x="329.85" y="257.09" width="7.70" height="7.62" fill="#00a9ff"/><rect x="329.85" y="264.66" width="7.70" height="7.62" fill="#00a3ff"/><rect x="329.85" y="272.23" width="7.70" height="7.62" fill="#0090ff"/><rect x="329.85" y="279.80" width="7.70" height="7.62" fill="#0072fb"/><rect x="329.85" y="287.37" width="7.70" height="7.62" fill="#004be3"/><rect x="329.85" y="294.94" width="7.70" height="7.62" fill="#0021b9"/><rect x="329.85" y="302.51" width="7.70" height="7.62" fill="#000676"/><rect x="329.85" y="310.08" width="7.70" height="7.62" fill="#000031"/><rect x="329.85" y="340.36" width="7.70" height="7.62" fill="#000011"/><rect x="329.85" y="355.50" width="7.70" height="7.62" fill="#00000a"/><rect x="329.85" y="385.78" width="7.70" height="7.62" fill="#000012"/><rect x="329.85" y="393.35" width="7.70" height="7.62" fill="#000008"/><rect x="337.50" y="82.98" width="7.70" height="7.62" fill="#00000c"/><rect x="337.50" y="135.97" width="7.70" height="7.62" fill="#000012"/><rect x="337.50" y="166.25" width="7.70" height="7.62" fill="#00000c"/><rect x="337.50" y="204.10" width="7.70" height="7.62" fill="#000022"/><rect x="337.50" y="211.67" width="7.70" height="7.62" fill="#00087d"/><rect x="337.50" y="219.24" width="7.70" height="7.62" fill="#0035d5"/><rect x="337.50" y="226.81" width="7.70" height="7.62" fill="#0079ff"/><rect x="337.50" y="234.38" width="7.70" height="7.62" fill="#00b8ff"/><rect x="337.50" y="241.95" width="7.70" height="7.62" fill="#00d5ff"/><rect x="337.50" y="249.52" width="7.70" height="7.62" fill="#00e5ff"/><rect x="337.50" y="257.09" width="7.70" height="7.62" fill="#00ebfe"/><rect x="337.50" y="264.66" width="7.70" height="7.62" fill="#00e8ff"/><rect x="337.50" y="272.23" width="7.70" height="7.62" fill="#00ddff"/><rect x="337.50" y="279.80" width="7.70" height="7.62" fill="#00caff"/><rect x="337.50" y="287.37" width="7.70" height="7.62" fill="#00a4ff"/><rect x="337.50" y="294.94" width="7.70" height="7.62" fill="#006cf8"/><rect x="337.50" y="302.51" width="7.70" height="7.62" fill="#0031cf"/><rect x="337.50" y="310.08" width="7.70" height="7.62" fill="#000983"/><rect x="337.50" y="317.65" width="7.70" height="7.62" fill="#000030"/><rect x="337.50" y="347.93" width="7.70" height="7.62" fill="#00000f"/><rect x="337.50" y="363.07" width="7.70" height="7.62" fill="#000016"/><rect x="337.50" y="400.92" width="7.70" height="7.62" fill="#00000e"/><rect x="337.50" y="408.49" width="7.70" height="7.62" fill="#000014"/><rect x="337.50" y="438.77" width="7.70" height="7.62" fill="#00000a"/><rect x="337.50" y="446.34" width="7.70" height="7.62" fill="#00000a"/><rect x="337.50" y="469.05" width="7.70" height="7.62" fill="#00000e"/><rect x="337.50" y="484.19" width="7.70" height="7.62" fill="#000009"/><rect x="345.15" y="52.70" width="7.70" height="7.62" fill="#00000a"/><rect x="345.15" y="98.12" width="7.70" height="7.62" fill="#00000d"/><rect x="345.15" y="166.25" width="7.70" height="7.62" fill="#00000d"/><rect x="345.15" y="196.53" width="7.70" height="7.62" fill="#000011"/><rect x="345.15" y="204.10" width="7.70" height="7.62" fill="#00015d"/><rect x="345.15" y="211.67" width="7.70" height="7.62" fill="#002cc8"/><rect x="345.15" y="219.24" width="7.70" height="7.62" fill="#007cff"/><rect x="345.15" y="226.81" width="7.70" height="7.62" fill="#00c6ff"/><rect x="345.15" y="234.38" width="7.70" height="7.62" fill="#00ebfe"/><rect x="345.15" y="241.95" width="7.70" height="7.62" fill="#00f7d2"/><rect x="345.15" y="249.52" width="7.70" height="7.62" fill="#00fc8b"/><rect x="345.15" y="257.09" width="7.70" height="7.62" fill="#00fd67"/><rect x="345.15" y="264.66" width="7.70" height="7.62" fill="#00fd7b"/><rect x="345.15" y="272.23" width="7.70" height="7.62" fill="#00fabb"/><rect x="345.15" y="279.80" width="7.70" height="7.62" fill="#00f2e5"/><rect x="345.15" y="287.37" width="7.70" height="7.62" fill="#00e0ff"/><rect x="345.15" y="294.94" width="7.70" height="7.62" fill="#00bdff"/><rect x="345.15" y="302.51" width="7.70" height="7.62" fill="#0075fd"/><rect x="345.15" y="310.08" width="7.70" height="7.62" fill="#0030cd"/><rect x="345.15" y="317.65" width="7.70" height="7.62" fill="#000573"/><rect x="345.15" y="325.22" width="7.70" height="7.62" fill="#000020"/><rect x="345.15" y="355.50" width="7.70" height="7.62" fill="#00000f"/><rect x="345.15" y="400.92" width="7.70" height="7.62" fill="#000015"/><rect x="345.15" y="416.06" width="7.70" height="7.62" fill="#00000c"/><rect x="345.15" y="431.20" width="7.70" height="7.62" fill="#000011"/><rect x="345.15" y="461.48" width="7.70" height="7.62" fill="#000008"/><rect x="345.15" y="469.05" width="7.70" height="7.62" fill="#000009"/><rect x="352.80" y="75.41" width="7.70" height="7.62" fill="#000010"/><rect x="352.80" y="196.53" width="7.70" height="7.62" fill="#00002d"/><rect x="352.80" y="204.10" width="7.70" height="7.62" fill="#000fa1"/><rect x="352.80" y="211.67" width="7.70" height="7.62" fill="#0061f1"/><rect x="352.80" y="219.24" width="7.70" height="7.62" fill="#00bfff"/><rect x="352.80" y="226.81" width="7.70" height="7.62" fill="#00edf9"/><rect x="352.80" y="234.38" width="7.70" height="7.62" fill="#00fc9d"/><rect x="352.80" y="241.95" width="7.70" height="7.62" fill="#4dff1f"/><rect x="352.80" y="249.52" width="7.70" height="7.62" fill="#b7ff00"/><rect x="352.80" y="257.09" width="7.70" height="7.62" fill="#d0ff00"/><rect x="352.80" y="264.66" width="7.70" height="7.62" fill="#c2ff00"/><rect x="352.80" y="272.23" width="7.70" height="7.62" fill="#8aff08"/><rect x="352.80" y="279.80" width="7.70" height="7.62" fill="#00ff3f"/><rect x="352.80" y="287.37" width="7.70" height="7.62" fill="#00f8ce"/><rect x="352.80" y="294.94" width="7.70" height="7.62" fill="#00e5ff"/><rect x="352.80" y="302.51" width="7.70" height="7.62" fill="#00b8ff"/><rect x="352.80" y="310.08" width="7.70" height="7.62" fill="#0066f4"/><rect x="352.80" y="317.65" width="7.70" height="7.62" fill="#001db3"/><rect x="352.80" y="325.22" width="7.70" height="7.62" fill="#00004c"/><rect x="352.80" y="332.79" width="7.70" height="7.62" fill="#00000d"/><rect x="352.80" y="408.49" width="7.70" height="7.62" fill="#00000d"/><rect x="352.80" y="461.48" width="7.70" height="7.62" fill="#00000e"/><rect x="360.45" y="75.41" width="7.70" height="7.62" fill="#000010"/><rect x="360.45" y="188.96" width="7.70" height="7.62" fill="#00000b"/><rect x="360.45" y="196.53" width="7.70" height="7.62" fill="#000053"/><rect x="360.45" y="204.10" width="7.70" height="7.62" fill="#002fcc"/><rect x="360.45" y="211.67" width="7.70" height="7.62" fill="#0092ff"/><rect x="360.45" y="219.24" width="7.70" height="7.62" fill="#00deff"/><rect x="360.45" y="226.81" width="7.70" height="7.62" fill="#00fabf"/><rect x="360.45" y="234.38" width="7.70" height="7.62" fill="#6eff13"/><rect x="360.45" y="241.95" width="7.70" height="7.62" fill="#f1fd00"/><rect x="360.45" y="249.52" width="7.70" height="7.62" fill="#fde000"/><rect x="360.45" y="257.09" width="7.70" height="7.62" fill="#ffcd00"/><rect x="360.45" y="264.66" width="7.70" height="7.62" fill="#ffda00"/><rect x="360.45" y="272.23" width="7.70" height="7.62" fill="#f7ef00"/><rect x="360.45" y="279.80" width="7.70" height="7.62" fill="#c6ff00"/><rect x="360.45" y="287.37" width="7.70" height="7.62" fill="#1bff32"/><rect x="360.45" y="294.94" width="7.70" height="7.62" fill="#00f7d5"/><rect x="360.45" y="302.51" width="7.70" height="7.62" fill="#00d9ff"/><rect x="360.45" y="310.08" width="7.70" height="7.62" fill="#0097ff"/><rect x="360.45" y="317.65" width="7.70" height="7.62" fill="#003fdc"/><rect x="360.45" y="325.22" width="7.70" height="7.62" fill="#00077b"/><rect x="360.45" y="332.79" width="7.70" height="7.62" fill="#00001e"/><rect x="360.45" y="340.36" width="7.70" height="7.62" fill="#000009"/><rect x="360.45" y="355.50" width="7.70" height="7.62" fill="#000009"/><rect x="360.45" y="385.78" width="7.70" height="7.62" fill="#000013"/><rect x="360.45" y="453.91" width="7.70" height="7.62" fill="#000016"/><rect x="360.45" y="476.62" width="7.70" height="7.62" fill="#00000c"/><rect x="368.10" y="75.41" width="7.70" height="7.62" fill="#000008"/><rect x="368.10" y="120.83" width="7.70" height="7.62" fill="#00000b"/><rect x="368.10" y="166.25" width="7.70" height="7.62" fill="#000013"/><rect x="368.10" y="181.39" width="7.70" height="7.62" fill="#00000f"/><rect x="368.10" y="188.96" width="7.70" height="7.62" fill="#000014"/><rect x="368.10" y="196.53" width="7.70" height="7.62" fill="#000676"/><rect x="368.10" y="204.10" width="7.70" height="7.62" fill="#004ce4"/><rect x="368.10" y="211.67" width="7.70" height="7.62" fill="#00b8ff"/><rect x="368.10" y="219.24" width="7.70" height="7.62" fill="#00eff0"/><rect x="368.10" y="226.81" width="7.70" height="7.62" fill="#00ff3c"/><rect x="368.10" y="234.38" width="7.70" height="7.62" fill="#e3ff00"/><rect x="368.10" y="241.95" width="7.70" height="7.62" fill="#ffce00"/><rect x="368.10" y="249.52" width="7.70" height="7.62" fill="#ff7f00"/><rect x="368.10" y="257.09" width="7.70" height="7.62" fill="#ff5300"/><rect x="368.10" y="264.66" width="7.70" height="7.62" fill="#ff6c00"/><rect x="368.10" y="272.23" width="7.70" height="7.62" fill="#ffac00"/><rect x="368.10" y="279.80" width="7.70" height="7.62" fill="#f9ea00"/><rect x="368.10" y="287.37" width="7.70" height="7.62" fill="#b3ff00"/><rect x="368.10" y="294.94" width="7.70" height="7.62" fill="#00fd71"/><rect x="368.10" y="302.51" width="7.70" height="7.62" fill="#00edf6"/><rect x="368.10" y="310.08" width="7.70" height="7.62" fill="#00bdff"/><rect x="368.10" y="317.65" width="7.70" height="7.62" fill="#005fef"/><rect x="368.10" y="325.22" width="7.70" height="7.62" fill="#0010a1"/><rect x="368.10" y="332.79" width="7.70" height="7.62" fill="#000032"/><rect x="368.10" y="393.35" width="7.70" height="7.62" fill="#000012"/><rect x="368.10" y="446.34" width="7.70" height="7.62" fill="#000012"/><rect x="375.75" y="52.70" width="7.70" height="7.62" fill="#000015"/><rect x="375.75" y="135.97" width="7.70" height="7.62" fill="#000010"/><rect x="375.75" y="188.96" width="7.70" height="7.62" fill="#00001b"/><rect x="375.75" y="196.53" width="7.70" height="7.62" fill="#000b8c"/><rect x="375.75" y="204.10" width="7.70" height="7.62" fill="#005ff0"/><rect x="375.75" y="211.67" width="7.70" height="7.62" fill="#00c7ff"/><rect x="375.75" y="219.24" width="7.70" height="7.62" fill="#00f5da"/><rect x="375.75" y="226.81" width="7.70" height="7.62" fill="#62ff17"/><rect x="375.75" y="234.38" width="7.70" height="7.62" fill="#f7ee00"/><rect x="375.75" y="241.95" width="7.70" height="7.62" fill="#ff9200"/><rect x="375.75" y="249.52" width="7.70" height="7.62" fill="#ff210e"/><rect x="375.75" y="257.09" width="7.70" height="7.62" fill="#ff0036"/><rect x="375.75" y="264.66" width="7.70" height="7.62" fill="#ff0d18"/><rect x="375.75" y="272.23" width="7.70" height="7.62" fill="#ff5c00"/><rect x="375.75" y="279.80" width="7.70" height="7.62" fill="#ffc500"/><rect x="375.75" y="287.37" width="7.70" height="7.62" fill="#ecff00"/><rect x="375.75" y="294.94" width="7.70" height="7.62" fill="#21ff30"/><rect x="375.75" y="302.51" width="7.70" height="7.62" fill="#00f3e1"/><rect x="375.75" y="310.08" width="7.70" height="7.62" fill="#00cbff"/><rect x="375.75" y="317.65" width="7.70" height="7.62" fill="#0072fb"/><rect x="375.75" y="325.22" width="7.70" height="7.62" fill="#001db4"/><rect x="375.75" y="332.79" width="7.70" height="7.62" fill="#000043"/><rect x="375.75" y="400.92" width="7.70" height="7.62" fill="#00000f"/><rect x="375.75" y="408.49" width="7.70" height="7.62" fill="#000016"/><rect x="383.40" y="82.98" width="7.70" height="7.62" fill="#00000d"/><rect x="383.40" y="113.26" width="7.70" height="7.62" fill="#00000a"/><rect x="383.40" y="158.68" width="7.70" height="7.62" fill="#000014"/><rect x="383.40" y="188.96" width="7.70" height="7.62" fill="#00001e"/><rect x="383.40" y="196.53" width="7.70" height="7.62" fill="#000c94"/><rect x="383.40" y="204.10" width="7.70" height="7.62" fill="#0065f3"/><rect x="383.40" y="211.67" width="7.70" height="7.62" fill="#00ccff"/><rect x="383.40" y="219.24" width="7.70" height="7.62" fill="#00f7d2"/><rect x="383.40" y="226.81" width="7.70" height="7.62" fill="#85ff0a"/><rect x="383.40" y="234.38" width="7.70" height="7.62" fill="#fbe600"/><rect x="383.40" y="241.95" width="7.70" height="7.62" fill="#ff7500"/><rect x="383.40" y="249.52" width="7.70" height="7.62" fill="#ff001f"/><rect x="383.40" y="257.09" width="7.70" height="7.62" fill="#ff00cc"/><rect x="383.40" y="264.66" width="7.70" height="7.62" fill="#ff0048"/><rect x="383.40" y="272.23" width="7.70" height="7.62" fill="#ff3901"/><rect x="383.40" y="279.80" width="7.70" height="7.62" fill="#ffb200"/><rect x="383.40" y="287.37" width="7.70" height="7.62" fill="#f2f900"/><rect x="383.40" y="294.94" width="7.70" height="7.62" fill="#41ff23"/><rect x="383.40" y="302.51" width="7.70" height="7.62" fill="#00f5d9"/><rect x="383.40" y="310.08" width="7.70" height="7.62" fill="#00cfff"/><rect x="383.40" y="317.65" width="7.70" height="7.62" fill="#0079ff"/><rect x="383.40" y="325.22" width="7.70" height="7.62" fill="#0022ba"/><rect x="383.40" y="332.79" width="7.70" height="7.62" fill="#000048"/><rect x="383.40" y="340.36" width="7.70" height="7.62" fill="#00000c"/><rect x="383.40" y="355.50" width="7.70" height="7.62" fill="#000014"/><rect x="383.40" y="378.21" width="7.70" height="7.62" fill="#00000a"/><rect x="383.40" y="453.91" width="7.70" height="7.62" fill="#000013"/><rect x="383.40" y="476.62" width="7.70" height="7.62" fill="#00000d"/><rect x="383.40" y="484.19" width="7.70" height="7.62" fill="#000010"/><rect x="391.05" y="52.70" width="7.70" height="7.62" fill="#00000c"/><rect x="391.05" y="120.83" width="7.70" height="7.62" fill="#000014"/><rect x="391.05" y="188.96" width="7.70" height="7.62" fill="#00001b"/><rect x="391.05" y="196.53" width="7.70" height="7.62" fill="#000b8c"/><rect x="391.05" y="204.10" width="7.70" height="7.62" fill="#005fef"/><rect x="391.05" y="211.67" width="7.70" height="7.62" fill="#00c7ff"/><rect x="391.05" y="219.24" width="7.70" height="7.62" fill="#00f5da"/><rect x="391.05" y="226.81" width="7.70" height="7.62" fill="#62ff17"/><rect x="391.05" y="234.38" width="7.70" height="7.62" fill="#f7ee00"/><rect x="391.05" y="241.95" width="7.70" height="7.62" fill="#ff9300"/><rect x="391.05" y="249.52" width="7.70" height="7.62" fill="#ff210d"/><rect x="391.05" y="257.09" width="7.70" height="7.62" fill="#ff0035"/><rect x="391.05" y="264.66" width="7.70" height="7.62" fill="#ff0d17"/><rect x="391.05" y="272.23" width="7.70" height="7.62" fill="#ff5c00"/><rect x="391.05" y="279.80" width="7.70" height="7.62" fill="#ffc500"/><rect x="391.05" y="287.37" width="7.70" height="7.62" fill="#ecff00"/><rect x="391.05" y="294.94" width="7.70" height="7.62" fill="#21ff30"/><rect x="391.05" y="302.51" width="7.70" height="7.62" fill="#00f3e1"/><rect x="391.05" y="310.08" width="7.70" height="7.62" fill="#00caff"/><rect x="391.05" y="317.65" width="7.70" height="7.62" fill="#0072fb"/><rect x="391.05" y="325.22" width="7.70" height="7.62" fill="#001db3"/><rect x="391.05" y="332.79" width="7.70" height="7.62" fill="#000043"/><rect x="391.05" y="438.77" width="7.70" height="7.62" fill="#000016"/><rect x="391.05" y="453.91" width="7.70" height="7.62" fill="#00000e"/><rect x="398.70" y="75.41" width="7.70" height="7.62" fill="#000012"/><rect x="398.70" y="82.98" width="7.70" height="7.62" fill="#000009"/><rect x="398.70" y="98.12" width="7.70" height="7.62" fill="#00000e"/><rect x="398.70" y="128.40" width="7.70" height="7.62" fill="#00000c"/><rect x="398.70" y="166.25" width="7.70" height="7.62" fill="#00000d"/><rect x="398.70" y="188.96" width="7.70" height="7.62" fill="#000014"/><rect x="398.70" y="196.53" width="7.70" height="7.62" fill="#000675"/><rect x="398.70" y="204.10" width="7.70" height="7.62" fill="#004ce4"/><rect x="398.70" y="211.67" width="7.70" height="7.62" fill="#00b7ff"/><rect x="398.70" y="219.24" width="7.70" height="7.62" fill="#00eff0"/><rect x="398.70" y="226.81" width="7.70" height="7.62" fill="#00ff3c"/><rect x="398.70" y="234.38" width="7.70" height="7.62" fill="#e2ff00"/><rect x="398.70" y="241.95" width="7.70" height="7.62" fill="#ffce00"/><rect x="398.70" y="249.52" width="7.70" height="7.62" fill="#ff7f00"/><rect x="398.70" y="257.09" width="7.70" height="7.62" fill="#ff5400"/><rect x="398.70" y="264.66" width="7.70" height="7.62" fill="#ff6c00"/><rect x="398.70" y="272.23" width="7.70" height="7.62" fill="#ffad00"/><rect x="398.70" y="279.80" width="7.70" height="7.62" fill="#f9ea00"/><rect x="398.70" y="287.37" width="7.70" height="7.62" fill="#b3ff00"/><rect x="398.70" y="294.94" width="7.70" height="7.62" fill="#00fd72"/><rect x="398.70" y="302.51" width="7.70" height="7.62" fill="#00edf7"/><rect x="398.70" y="310.08" width="7.70" height="7.62" fill="#00bdff"/><rect x="398.70" y="317.65" width="7.70" height="7.62" fill="#005eef"/><rect x="398.70" y="325.22" width="7.70" height="7.62" fill="#0010a1"/><rect x="398.70" y="332.79" width="7.70" height="7.62" fill="#000032"/><rect x="398.70" y="416.06" width="7.70" height="7.62" fill="#000013"/><rect x="398.70" y="423.63" width="7.70" height="7.62" fill="#000009"/><rect x="398.70" y="469.05" width="7.70" height="7.62" fill="#000012"/><rect x="406.35" y="52.70" width="7.70" height="7.62" fill="#000016"/><rect x="406.35" y="135.97" width="7.70" height="7.62" fill="#00000a"/><rect x="406.35" y="151.11" width="7.70" height="7.62" fill="#000014"/><rect x="406.35" y="196.53" width="7.70" height="7.62" fill="#000053"/><rect x="406.35" y="204.10" width="7.70" height="7.62" fill="#002fcc"/><rect x="406.35" y="211.67" width="7.70" height="7.62" fill="#0091ff"/><rect x="406.35" y="219.24" width="7.70" height="7.62" fill="#00ddff"/><rect x="406.35" y="226.81" width="7.70" height="7.62" fill="#00fac0"/><rect x="406.35" y="234.38" width="7.70" height="7.62" fill="#6dff13"/><rect x="406.35" y="241.95" width="7.70" height="7.62" fill="#f1fd00"/><rect x="406.35" y="249.52" width="7.70" height="7.62" fill="#fde100"/><rect x="406.35" y="257.09" width="7.70" height="7.62" fill="#ffce00"/><rect x="406.35" y="264.66" width="7.70" height="7.62" fill="#ffdb00"/><rect x="406.35" y="272.23" width="7.70" height="7.62" fill="#f7f000"/><rect x="406.35" y="279.80" width="7.70" height="7.62" fill="#c6ff00"/><rect x="406.35" y="287.37" width="7.70" height="7.62" fill="#1aff32"/><rect x="406.35" y="294.94" width="7.70" height="7.62" fill="#00f6d5"/><rect x="406.35" y="302.51" width="7.70" height="7.62" fill="#00d9ff"/><rect x="406.35" y="310.08" width="7.70" height="7.62" fill="#0097ff"/><rect x="406.35" y="317.65" width="7.70" height="7.62" fill="#003fdc"/><rect x="406.35" y="325.22" width="7.70" height="7.62" fill="#00077b"/><rect x="406.35" y="332.79" width="7.70" height="7.62" fill="#00001e"/><rect x="406.35" y="347.93" width="7.70" height="7.62" fill="#000010"/><rect x="406.35" y="378.21" width="7.70" height="7.62" fill="#00000b"/><rect x="406.35" y="416.06" width="7.70" height="7.62" fill="#000010"/><rect x="406.35" y="453.91" width="7.70" height="7.62" fill="#000009"/><rect x="406.35" y="469.05" width="7.70" height="7.62" fill="#000008"/><rect x="414.00" y="90.55" width="7.70" height="7.62" fill="#000015"/><rect x="414.00" y="98.12" width="7.70" height="7.62" fill="#00000c"/><rect x="414.00" y="120.83" width="7.70" height="7.62" fill="#00000d"/><rect x="414.00" y="151.11" width="7.70" height="7.62" fill="#000014"/><rect x="414.00" y="166.25" width="7.70" height="7.62" fill="#000010"/><rect x="414.00" y="196.53" width="7.70" height="7.62" fill="#00002c"/><rect x="414.00" y="204.10" width="7.70" height="7.62" fill="#000fa0"/><rect x="414.00" y="211.67" width="7.70" height="7.62" fill="#0061f1"/><rect x="414.00" y="219.24" width="7.70" height="7.62" fill="#00bfff"/><rect x="414.00" y="226.81" width="7.70" height="7.62" fill="#00ecfa"/><rect x="414.00" y="234.38" width="7.70" height="7.62" fill="#00fb9e"/><rect x="414.00" y="241.95" width="7.70" height="7.62" fill="#4bff20"/><rect x="414.00" y="249.52" width="7.70" height="7.62" fill="#b6ff00"/><rect x="414.00" y="257.09" width="7.70" height="7.62" fill="#cfff00"/><rect x="414.00" y="264.66" width="7.70" height="7.62" fill="#c1ff00"/><rect x="414.00" y="272.23" width="7.70" height="7.62" fill="#89ff09"/><rect x="414.00" y="279.80" width="7.70" height="7.62" fill="#00ff40"/><rect x="414.00" y="287.37" width="7.70" height="7.62" fill="#00f8cf"/><rect x="414.00" y="294.94" width="7.70" height="7.62" fill="#00e5ff"/><rect x="414.00" y="302.51" width="7.70" height="7.62" fill="#00b8ff"/><rect x="414.00" y="310.08" width="7.70" height="7.62" fill="#0066f4"/><rect x="414.00" y="317.65" width="7.70" height="7.62" fill="#001cb3"/><rect x="414.00" y="325.22" width="7.70" height="7.62" fill="#00004c"/><rect x="414.00" y="332.79" width="7.70" height="7.62" fill="#00000c"/><rect x="414.00" y="385.78" width="7.70" height="7.62" fill="#00000d"/><rect x="414.00" y="400.92" width="7.70" height="7.62" fill="#000012"/><rect x="414.00" y="423.63" width="7.70" height="7.62" fill="#000008"/><rect x="421.65" y="82.98" width="7.70" height="7.62" fill="#00000f"/><rect x="421.65" y="98.12" width="7.70" height="7.62" fill="#000016"/><rect x="421.65" y="120.83" width="7.70" height="7.62" fill="#000010"/><rect x="421.65" y="128.40" width="7.70" height="7.62" fill="#000010"/><rect x="421.65" y="135.97" width="7.70" height="7.62" fill="#00000d"/><rect x="421.65" y="158.68" width="7.70" height="7.62" fill="#000009"/><rect x="421.65" y="196.53" width="7.70" height="7.62" fill="#000011"/><rect x="421.65" y="204.10" width="7.70" height="7.62" fill="#00015c"/><rect x="421.65" y="211.67" width="7.70" height="7.62" fill="#002cc8"/><rect x="421.65" y="219.24" width="7.70" height="7.62" fill="#007bff"/><rect x="421.65" y="226.81" width="7.70" height="7.62" fill="#00c6ff"/><rect x="421.65" y="234.38" width="7.70" height="7.62" fill="#00ebff"/><rect x="421.65" y="241.95" width="7.70" height="7.62" fill="#00f7d3"/><rect x="421.65" y="249.52" width="7.70" height="7.62" fill="#00fc8d"/><rect x="421.65" y="257.09" width="7.70" height="7.62" fill="#00fd69"/><rect x="421.65" y="264.66" width="7.70" height="7.62" fill="#00fd7c"/><rect x="421.65" y="272.23" width="7.70" height="7.62" fill="#00fabd"/><rect x="421.65" y="279.80" width="7.70" height="7.62" fill="#00f2e5"/><rect x="421.65" y="287.37" width="7.70" height="7.62" fill="#00e0ff"/><rect x="421.65" y="294.94" width="7.70" height="7.62" fill="#00bcff"/><rect x="421.65" y="302.51" width="7.70" height="7.62" fill="#0075fd"/><rect x="421.65" y="310.08" width="7.70" height="7.62" fill="#002fcc"/><rect x="421.65" y="317.65" width="7.70" height="7.62" fill="#000572"/><rect x="421.65" y="325.22" width="7.70" height="7.62" fill="#000020"/><rect x="421.65" y="332.79" width="7.70" height="7.62" fill="#00000f"/><rect x="421.65" y="347.93" width="7.70" height="7.62" fill="#000010"/><rect x="421.65" y="370.64" width="7.70" height="7.62" fill="#000012"/><rect x="421.65" y="446.34" width="7.70" height="7.62" fill="#000012"/><rect x="421.65" y="461.48" width="7.70" height="7.62" fill="#000013"/><rect x="429.30" y="52.70" width="7.70" height="7.62" fill="#00000a"/><rect x="429.30" y="60.27" width="7.70" height="7.62" fill="#000012"/><rect x="429.30" y="113.26" width="7.70" height="7.62" fill="#000012"/><rect x="429.30" y="158.68" width="7.70" height="7.62" fill="#00000c"/><rect x="429.30" y="204.10" width="7.70" height="7.62" fill="#000022"/><rect x="429.30" y="211.67" width="7.70" height="7.62" fill="#00077c"/><rect x="429.30" y="219.24" width="7.70" height="7.62" fill="#0035d4"/><rect x="429.30" y="226.81" width="7.70" height="7.62" fill="#0079ff"/><rect x="429.30" y="234.38" width="7.70" height="7.62" fill="#00b7ff"/><rect x="429.30" y="241.95" width="7.70" height="7.62" fill="#00d4ff"/><rect x="429.30" y="249.52" width="7.70" height="7.62" fill="#00e5ff"/><rect x="429.30" y="257.09" width="7.70" height="7.62" fill="#00ebfe"/><rect x="429.30" y="264.66" width="7.70" height="7.62" fill="#00e8ff"/><rect x="429.30" y="272.23" width="7.70" height="7.62" fill="#00dcff"/><rect x="429.30" y="279.80" width="7.70" height="7.62" fill="#00c9ff"/><rect x="429.30" y="287.37" width="7.70" height="7.62" fill="#00a4ff"/><rect x="429.30" y="294.94" width="7.70" height="7.62" fill="#006bf7"/><rect x="429.30" y="302.51" width="7.70" height="7.62" fill="#0031cf"/><rect x="429.30" y="310.08" width="7.70" height="7.62" fill="#000982"/><rect x="429.30" y="317.65" width="7.70" height="7.62" fill="#00002f"/><rect x="429.30" y="325.22" width="7.70" height="7.62" fill="#00000c"/><rect x="429.30" y="370.64" width="7.70" height="7.62" fill="#00000b"/><rect x="429.30" y="385.78" width="7.70" height="7.62" fill="#00000e"/><rect x="429.30" y="408.49" width="7.70" height="7.62" fill="#00000a"/><rect x="436.95" y="75.41" width="7.70" height="7.62" fill="#000016"/><rect x="436.95" y="113.26" width="7.70" height="7.62" fill="#000014"/><rect x="436.95" y="166.25" width="7.70" height="7.62" fill="#000010"/><rect x="436.95" y="211.67" width="7.70" height="7.62" fill="#00002c"/><rect x="436.95" y="219.24" width="7.70" height="7.62" fill="#00077c"/><rect x="436.95" y="226.81" width="7.70" height="7.62" fill="#002ac5"/><rect x="436.95" y="234.38" width="7.70" height="7.62" fill="#005aed"/><rect x="436.95" y="241.95" width="7.70" height="7.62" fill="#0082ff"/><rect x="436.95" y="249.52" width="7.70" height="7.62" fill="#009eff"/><rect x="436.95" y="257.09" width="7.70" height="7.62" fill="#00a8ff"/><rect x="436.95" y="264.66" width="7.70" height="7.62" fill="#00a2ff"/><rect x="436.95" y="272.23" width="7.70" height="7.62" fill="#0090ff"/><rect x="436.95" y="279.80" width="7.70" height="7.62" fill="#0071fb"/><rect x="436.95" y="287.37" width="7.70" height="7.62" fill="#004ae3"/><rect x="436.95" y="294.94" width="7.70" height="7.62" fill="#0021b9"/><rect x="436.95" y="302.51" width="7.70" height="7.62" fill="#000676"/><rect x="436.95" y="310.08" width="7.70" height="7.62" fill="#000030"/><rect x="436.95" y="332.79" width="7.70" height="7.62" fill="#000014"/><rect x="436.95" y="347.93" width="7.70" height="7.62" fill="#000009"/><rect x="436.95" y="400.92" width="7.70" height="7.62" fill="#00000b"/><rect x="436.95" y="446.34" width="7.70" height="7.62" fill="#000010"/><rect x="436.95" y="453.91" width="7.70" height="7.62" fill="#00000d"/><rect x="444.60" y="52.70" width="7.70" height="7.62" fill="#000016"/><rect x="444.60" y="98.12" width="7.70" height="7.62" fill="#000010"/><rect x="444.60" y="188.96" width="7.70" height="7.62" fill="#00000c"/><rect x="444.60" y="219.24" width="7.70" height="7.62" fill="#000023"/><rect x="444.60" y="226.81" width="7.70" height="7.62" fill="#00005c"/><rect x="444.60" y="234.38" width="7.70" height="7.62" fill="#000e9b"/><rect x="444.60" y="241.95" width="7.70" height="7.62" fill="#0027c1"/><rect x="444.60" y="249.52" width="7.70" height="7.62" fill="#0039d8"/><rect x="444.60" y="257.09" width="7.70" height="7.62" fill="#0041dd"/><rect x="444.60" y="264.66" width="7.70" height="7.62" fill="#003cda"/><rect x="444.60" y="272.23" width="7.70" height="7.62" fill="#002fcd"/><rect x="444.60" y="279.80" width="7.70" height="7.62" fill="#001cb2"/><rect x="444.60" y="287.37" width="7.70" height="7.62" fill="#000a88"/><rect x="444.60" y="294.94" width="7.70" height="7.62" fill="#000050"/><rect x="444.60" y="302.51" width="7.70" height="7.62" fill="#000020"/><rect x="444.60" y="416.06" width="7.70" height="7.62" fill="#00000e"/><rect x="444.60" y="469.05" width="7.70" height="7.62" fill="#000011"/><rect x="444.60" y="476.62" width="7.70" height="7.62" fill="#00000a"/><rect x="452.25" y="60.27" width="7.70" height="7.62" fill="#00000d"/><rect x="452.25" y="67.84" width="7.70" height="7.62" fill="#000014"/><rect x="452.25" y="151.11" width="7.70" height="7.62" fill="#00000a"/><rect x="452.25" y="226.81" width="7.70" height="7.62" fill="#000013"/><rect x="452.25" y="234.38" width="7.70" height="7.62" fill="#00002c"/><rect x="452.25" y="241.95" width="7.70" height="7.62" fill="#00004d"/><rect x="452.25" y="249.52" width="7.70" height="7.62" fill="#000264"/><rect x="452.25" y="257.09" width="7.70" height="7.62" fill="#00046e"/><rect x="452.25" y="264.66" width="7.70" height="7.62" fill="#000368"/><rect x="452.25" y="272.23" width="7.70" height="7.62" fill="#000057"/><rect x="452.25" y="279.80" width="7.70" height="7.62" fill="#00003f"/><rect x="452.25" y="287.37" width="7.70" height="7.62" fill="#000021"/><rect x="452.25" y="294.94" width="7.70" height="7.62" fill="#00000e"/><rect x="452.25" y="332.79" width="7.70" height="7.62" fill="#000009"/><rect x="452.25" y="363.07" width="7.70" height="7.62" fill="#000015"/><rect x="452.25" y="370.64" width="7.70" height="7.62" fill="#000013"/><rect x="452.25" y="393.35" width="7.70" height="7.62" fill="#000010"/><rect x="452.25" y="400.92" width="7.70" height="7.62" fill="#00000b"/><rect x="452.25" y="431.20" width="7.70" height="7.62" fill="#00000e"/><rect x="452.25" y="438.77" width="7.70" height="7.62" fill="#000012"/><rect x="459.90" y="67.84" width="7.70" height="7.62" fill="#000016"/><rect x="459.90" y="98.12" width="7.70" height="7.62" fill="#000009"/><rect x="459.90" y="113.26" width="7.70" height="7.62" fill="#00000b"/><rect x="459.90" y="120.83" width="7.70" height="7.62" fill="#00000f"/><rect x="459.90" y="128.40" width="7.70" height="7.62" fill="#000010"/><rect x="459.90" y="219.24" width="7.70" height="7.62" fill="#000014"/><rect x="459.90" y="234.38" width="7.70" height="7.62" fill="#000015"/><rect x="459.90" y="249.52" width="7.70" height="7.62" fill="#000010"/><rect x="459.90" y="257.09" width="7.70" height="7.62" fill="#000014"/><rect x="459.90" y="264.66" width="7.70" height="7.62" fill="#000012"/><rect x="459.90" y="272.23" width="7.70" height="7.62" fill="#00000c"/><rect x="459.90" y="332.79" width="7.70" height="7.62" fill="#000014"/><rect x="459.90" y="340.36" width="7.70" height="7.62" fill="#000016"/><rect x="459.90" y="408.49" width="7.70" height="7.62" fill="#00000d"/><rect x="459.90" y="416.06" width="7.70" height="7.62" fill="#000016"/><rect x="459.90" y="484.19" width="7.70" height="7.62" fill="#000013"/><rect x="467.55" y="166.25" width="7.70" height="7.62" fill="#00000f"/><rect x="467.55" y="188.96" width="7.70" height="7.62" fill="#000015"/><rect x="467.55" y="204.10" width="7.70" height="7.62" fill="#000010"/><rect x="467.55" y="264.66" width="7.70" height="7.62" fill="#00000d"/><rect x="467.55" y="294.94" width="7.70" height="7.62" fill="#00000f"/><rect x="467.55" y="340.36" width="7.70" height="7.62" fill="#00000f"/><rect x="467.55" y="385.78" width="7.70" height="7.62" fill="#000010"/><rect x="467.55" y="393.35" width="7.70" height="7.62" fill="#000016"/><rect x="467.55" y="416.06" width="7.70" height="7.62" fill="#000008"/><rect x="467.55" y="438.77" width="7.70" height="7.62" fill="#00000d"/><rect x="467.55" y="476.62" width="7.70" height="7.62" fill="#000014"/><rect x="475.20" y="151.11" width="7.70" height="7.62" fill="#000012"/><rect x="475.20" y="196.53" width="7.70" height="7.62" fill="#00000a"/><rect x="475.20" y="226.81" width="7.70" height="7.62" fill="#000013"/><rect x="475.20" y="264.66" width="7.70" height="7.62" fill="#00000c"/><rect x="475.20" y="310.08" width="7.70" height="7.62" fill="#00000b"/><rect x="475.20" y="393.35" width="7.70" height="7.62" fill="#000012"/><rect x="475.20" y="400.92" width="7.70" height="7.62" fill="#00000c"/><rect x="475.20" y="469.05" width="7.70" height="7.62" fill="#000015"/><rect x="482.85" y="67.84" width="7.70" height="7.62" fill="#00000e"/><rect x="482.85" y="317.65" width="7.70" height="7.62" fill="#000011"/><rect x="482.85" y="332.79" width="7.70" height="7.62" fill="#000016"/><rect x="482.85" y="355.50" width="7.70" height="7.62" fill="#000014"/><rect x="482.85" y="408.49" width="7.70" height="7.62" fill="#000016"/><rect x="482.85" y="461.48" width="7.70" height="7.62" fill="#000015"/><rect x="490.50" y="105.69" width="7.70" height="7.62" fill="#00000e"/><rect x="490.50" y="151.11" width="7.70" height="7.62" fill="#00000b"/><rect x="490.50" y="158.68" width="7.70" height="7.62" fill="#00000c"/><rect x="490.50" y="188.96" width="7.70" height="7.62" fill="#00000b"/><rect x="490.50" y="272.23" width="7.70" height="7.62" fill="#00000b"/><rect x="490.50" y="294.94" width="7.70" height="7.62" fill="#00000d"/><rect x="490.50" y="302.51" width="7.70" height="7.62" fill="#000014"/><rect x="490.50" y="310.08" width="7.70" height="7.62" fill="#00000e"/><rect x="490.50" y="378.21" width="7.70" height="7.62" fill="#000013"/><rect x="490.50" y="385.78" width="7.70" height="7.62" fill="#000013"/><rect x="490.50" y="423.63" width="7.70" height="7.62" fill="#00000d"/><rect x="490.50" y="431.20" width="7.70" height="7.62" fill="#00000f"/><rect x="490.50" y="446.34" width="7.70" height="7.62" fill="#00000b"/><rect x="498.15" y="90.55" width="7.70" height="7.62" fill="#000011"/><rect x="498.15" y="98.12" width="7.70" height="7.62" fill="#000009"/><rect x="498.15" y="120.83" width="7.70" height="7.62" fill="#00000a"/><rect x="498.15" y="173.82" width="7.70" height="7.62" fill="#000009"/><rect x="498.15" y="234.38" width="7.70" height="7.62" fill="#000012"/><rect x="498.15" y="264.66" width="7.70" height="7.62" fill="#000014"/><rect x="498.15" y="294.94" width="7.70" height="7.62" fill="#00000e"/><rect x="498.15" y="302.51" width="7.70" height="7.62" fill="#00000b"/><rect x="498.15" y="325.22" width="7.70" height="7.62" fill="#000009"/><rect x="498.15" y="340.36" width="7.70" height="7.62" fill="#00000a"/><rect x="498.15" y="408.49" width="7.70" height="7.62" fill="#000016"/><rect x="498.15" y="431.20" width="7.70" height="7.62" fill="#00000d"/><rect x="498.15" y="446.34" width="7.70" height="7.62" fill="#00000c"/><rect x="498.15" y="453.91" width="7.70" height="7.62" fill="#000015"/><rect x="505.80" y="90.55" width="7.70" height="7.62" fill="#000010"/><rect x="505.80" y="113.26" width="7.70" height="7.62" fill="#000014"/><rect x="505.80" y="143.54" width="7.70" height="7.62" fill="#00000c"/><rect x="505.80" y="151.11" width="7.70" height="7.62" fill="#000011"/><rect x="505.80" y="294.94" width="7.70" height="7.62" fill="#000013"/><rect x="505.80" y="416.06" width="7.70" height="7.62" fill="#000015"/><rect x="505.80" y="446.34" width="7.70" height="7.62" fill="#00000e"/><rect x="505.80" y="476.62" width="7.70" height="7.62" fill="#00000b"/><rect x="513.45" y="113.26" width="7.70" height="7.62" fill="#000016"/><rect x="513.45" y="143.54" width="7.70" height="7.62" fill="#000011"/><rect x="513.45" y="166.25" width="7.70" height="7.62" fill="#00000e"/><rect x="513.45" y="211.67" width="7.70" height="7.62" fill="#000008"/><rect x="513.45" y="272.23" width="7.70" height="7.62" fill="#000011"/><rect x="513.45" y="393.35" width="7.70" height="7.62" fill="#00000c"/><rect x="513.45" y="408.49" width="7.70" height="7.62" fill="#00000b"/><rect x="513.45" y="431.20" width="7.70" height="7.62" fill="#000012"/><rect x="513.45" y="453.91" width="7.70" height="7.62" fill="#00000f"/><rect x="513.45" y="476.62" width="7.70" height="7.62" fill="#00000e"/><rect x="521.10" y="67.84" width="7.70" height="7.62" fill="#000015"/><rect x="521.10" y="75.41" width="7.70" height="7.62" fill="#000015"/><rect x="521.10" y="82.98" width="7.70" height="7.62" fill="#000013"/><rect x="521.10" y="158.68" width="7.70" height="7.62" fill="#000015"/><rect x="521.10" y="173.82" width="7.70" height="7.62" fill="#000015"/><rect x="521.10" y="211.67" width="7.70" height="7.62" fill="#000009"/><rect x="521.10" y="226.81" width="7.70" height="7.62" fill="#00000b"/><rect x="521.10" y="234.38" width="7.70" height="7.62" fill="#00000a"/><rect x="521.10" y="272.23" width="7.70" height="7.62" fill="#000009"/><rect x="521.10" y="332.79" width="7.70" height="7.62" fill="#000012"/><rect x="521.10" y="423.63" width="7.70" height="7.62" fill="#000013"/><rect x="521.10" y="431.20" width="7.70" height="7.62" fill="#000014"/><rect x="528.75" y="75.41" width="7.70" height="7.62" fill="#00000d"/><rect x="528.75" y="158.68" width="7.70" height="7.62" fill="#000009"/><rect x="528.75" y="188.96" width="7.70" height="7.62" fill="#00000d"/><rect x="528.75" y="196.53" width="7.70" height="7.62" fill="#000011"/><rect x="528.75" y="234.38" width="7.70" height="7.62" fill="#00000f"/><rect x="528.75" y="340.36" width="7.70" height="7.62" fill="#000011"/><rect x="528.75" y="355.50" width="7.70" height="7.62" fill="#00000a"/><rect x="528.75" y="423.63" width="7.70" height="7.62" fill="#00000e"/><rect x="528.75" y="431.20" width="7.70" height="7.62" fill="#000010"/><rect x="528.75" y="453.91" width="7.70" height="7.62" fill="#000010"/><rect x="536.40" y="52.70" width="7.70" height="7.62" fill="#00000b"/><rect x="536.40" y="60.27" width="7.70" height="7.62" fill="#000015"/><rect x="536.40" y="120.83" width="7.70" height="7.62" fill="#00000a"/><rect x="536.40" y="143.54" width="7.70" height="7.62" fill="#000008"/><rect x="536.40" y="279.80" width="7.70" height="7.62" fill="#000015"/><rect x="536.40" y="302.51" width="7.70" height="7.62" fill="#00000d"/><rect x="536.40" y="325.22" width="7.70" height="7.62" fill="#00000e"/><rect x="536.40" y="355.50" width="7.70" height="7.62" fill="#000010"/><rect x="536.40" y="408.49" width="7.70" height="7.62" fill="#00000c"/><rect x="536.40" y="484.19" width="7.70" height="7.62" fill="#000008"/><rect x="544.05" y="52.70" width="7.70" height="7.62" fill="#00000f"/><rect x="544.05" y="143.54" width="7.70" height="7.62" fill="#000011"/><rect x="544.05" y="241.95" width="7.70" height="7.62" fill="#000011"/><rect x="544.05" y="272.23" width="7.70" height="7.62" fill="#000011"/><rect x="544.05" y="294.94" width="7.70" height="7.62" fill="#000016"/><rect x="544.05" y="302.51" width="7.70" height="7.62" fill="#000011"/><rect x="544.05" y="461.48" width="7.70" height="7.62" fill="#000016"/><rect x="551.70" y="82.98" width="7.70" height="7.62" fill="#000008"/><rect x="551.70" y="143.54" width="7.70" height="7.62" fill="#00000c"/><rect x="551.70" y="151.11" width="7.70" height="7.62" fill="#000016"/><rect x="551.70" y="158.68" width="7.70" height="7.62" fill="#000009"/><rect x="551.70" y="166.25" width="7.70" height="7.62" fill="#00000c"/><rect x="551.70" y="219.24" width="7.70" height="7.62" fill="#000015"/><rect x="551.70" y="363.07" width="7.70" height="7.62" fill="#000013"/><rect x="551.70" y="416.06" width="7.70" height="7.62" fill="#000012"/><rect x="551.70" y="461.48" width="7.70" height="7.62" fill="#00000b"/><rect x="559.35" y="52.70" width="7.70" height="7.62" fill="#00000e"/><rect x="559.35" y="82.98" width="7.70" height="7.62" fill="#000009"/><rect x="559.35" y="120.83" width="7.70" height="7.62" fill="#00000c"/><rect x="559.35" y="128.40" width="7.70" height="7.62" fill="#000011"/><rect x="559.35" y="166.25" width="7.70" height="7.62" fill="#00000d"/><rect x="559.35" y="241.95" width="7.70" height="7.62" fill="#000008"/><rect x="559.35" y="287.37" width="7.70" height="7.62" fill="#00000d"/><rect x="559.35" y="325.22" width="7.70" height="7.62" fill="#00000d"/><rect x="559.35" y="355.50" width="7.70" height="7.62" fill="#000011"/><rect x="559.35" y="408.49" width="7.70" height="7.62" fill="#000009"/><rect x="559.35" y="469.05" width="7.70" height="7.62" fill="#000013"/><rect x="567.00" y="158.68" width="7.70" height="7.62" fill="#000013"/><rect x="567.00" y="196.53" width="7.70" height="7.62" fill="#000010"/><rect x="567.00" y="332.79" width="7.70" height="7.62" fill="#000010"/><rect x="567.00" y="347.93" width="7.70" height="7.62" fill="#000009"/><rect x="574.65" y="52.70" width="7.70" height="7.62" fill="#00000b"/><rect x="574.65" y="135.97" width="7.70" height="7.62" fill="#000008"/><rect x="574.65" y="158.68" width="7.70" height="7.62" fill="#000009"/><rect x="574.65" y="211.67" width="7.70" height="7.62" fill="#00000c"/><rect x="574.65" y="279.80" width="7.70" height="7.62" fill="#00000c"/><rect x="574.65" y="325.22" width="7.70" height="7.62" fill="#000016"/><rect x="574.65" y="347.93" width="7.70" height="7.62" fill="#00000b"/><rect x="574.65" y="355.50" width="7.70" height="7.62" fill="#00000b"/><rect x="574.65" y="378.21" width="7.70" height="7.62" fill="#000012"/><rect x="574.65" y="393.35" width="7.70" height="7.62" fill="#00000f"/><rect x="574.65" y="400.92" width="7.70" height="7.62" fill="#00000f"/><rect x="582.30" y="82.98" width="7.70" height="7.62" fill="#000010"/><rect x="582.30" y="98.12" width="7.70" height="7.62" fill="#00000c"/><rect x="582.30" y="120.83" width="7.70" height="7.62" fill="#000016"/><rect x="582.30" y="211.67" width="7.70" height="7.62" fill="#000010"/><rect x="582.30" y="219.24" width="7.70" height="7.62" fill="#00000c"/><rect x="582.30" y="340.36" width="7.70" height="7.62" fill="#000009"/><rect x="582.30" y="408.49" width="7.70" height="7.62" fill="#000015"/><rect x="582.30" y="431.20" width="7.70" height="7.62" fill="#00000c"/><rect x="589.95" y="98.12" width="7.70" height="7.62" fill="#000012"/><rect x="589.95" y="120.83" width="7.70" height="7.62" fill="#00000e"/><rect x="589.95" y="135.97" width="7.70" height="7.62" fill="#00000a"/><rect x="589.95" y="151.11" width="7.70" height="7.62" fill="#00000c"/><rect x="589.95" y="158.68" width="7.70" height="7.62" fill="#000009"/><rect x="589.95" y="166.25" width="7.70" height="7.62" fill="#00000b"/><rect x="589.95" y="347.93" width="7.70" height="7.62" fill="#000010"/><rect x="589.95" y="370.64" width="7.70" height="7.62" fill="#000014"/><rect x="589.95" y="416.06" width="7.70" height="7.62" fill="#000015"/><rect x="589.95" y="453.91" width="7.70" height="7.62" fill="#00000b"/><rect x="597.60" y="143.54" width="7.70" height="7.62" fill="#000014"/><rect x="597.60" y="173.82" width="7.70" height="7.62" fill="#000014"/><rect x="597.60" y="249.52" width="7.70" height="7.62" fill="#00000e"/><rect x="597.60" y="257.09" width="7.70" height="7.62" fill="#000015"/><rect x="597.60" y="340.36" width="7.70" height="7.62" fill="#00000f"/><rect x="597.60" y="423.63" width="7.70" height="7.62" fill="#00000f"/><rect x="597.60" y="461.48" width="7.70" height="7.62" fill="#000011"/><rect x="605.25" y="67.84" width="7.70" height="7.62" fill="#000014"/><rect x="605.25" y="105.69" width="7.70" height="7.62" fill="#000016"/><rect x="605.25" y="158.68" width="7.70" height="7.62" fill="#00000a"/><rect x="605.25" y="249.52" width="7.70" height="7.62" fill="#00000a"/><rect x="605.25" y="279.80" width="7.70" height="7.62" fill="#00000f"/><rect x="605.25" y="347.93" width="7.70" height="7.62" fill="#00000e"/><rect x="605.25" y="393.35" width="7.70" height="7.62" fill="#000011"/><rect x="605.25" y="438.77" width="7.70" height="7.62" fill="#000010"/><rect x="605.25" y="453.91" width="7.70" height="7.62" fill="#000016"/><rect x="605.25" y="469.05" width="7.70" height="7.62" fill="#000015"/><rect x="612.90" y="105.69" width="7.70" height="7.62" fill="#000014"/><rect x="612.90" y="166.25" width="7.70" height="7.62" fill="#000012"/><rect x="612.90" y="211.67" width="7.70" height="7.62" fill="#00000d"/><rect x="612.90" y="219.24" width="7.70" height="7.62" fill="#00000d"/><rect x="612.90" y="234.38" width="7.70" height="7.62" fill="#00000b"/><rect x="612.90" y="302.51" width="7.70" height="7.62" fill="#000015"/><rect x="612.90" y="310.08" width="7.70" height="7.62" fill="#000012"/><rect x="612.90" y="332.79" width="7.70" height="7.62" fill="#00000a"/><rect x="612.90" y="355.50" width="7.70" height="7.62" fill="#000009"/><rect x="612.90" y="385.78" width="7.70" height="7.62" fill="#000011"/><rect x="612.90" y="393.35" width="7.70" height="7.62" fill="#000014"/><rect x="612.90" y="416.06" width="7.70" height="7.62" fill="#00000c"/><rect x="612.90" y="431.20" width="7.70" height="7.62" fill="#000013"/><rect x="612.90" y="438.77" width="7.70" height="7.62" fill="#000015"/><rect x="620.55" y="90.55" width="7.70" height="7.62" fill="#000010"/><rect x="620.55" y="249.52" width="7.70" height="7.62" fill="#000015"/><rect x="620.55" y="264.66" width="7.70" height="7.62" fill="#00000b"/><rect x="620.55" y="272.23" width="7.70" height="7.62" fill="#00000f"/><rect x="620.55" y="325.22" width="7.70" height="7.62" fill="#00000b"/><rect x="620.55" y="355.50" width="7.70" height="7.62" fill="#00000b"/><rect x="620.55" y="363.07" width="7.70" height="7.62" fill="#000012"/><rect x="620.55" y="408.49" width="7.70" height="7.62" fill="#00000f"/><rect x="620.55" y="438.77" width="7.70" height="7.62" fill="#000016"/><rect x="620.55" y="446.34" width="7.70" height="7.62" fill="#000016"/><rect x="620.55" y="469.05" width="7.70" height="7.62" fill="#000012"/><rect x="628.20" y="67.84" width="7.70" height="7.62" fill="#000011"/><rect x="628.20" y="82.98" width="7.70" height="7.62" fill="#00000c"/><rect x="628.20" y="113.26" width="7.70" height="7.62" fill="#000010"/><rect x="628.20" y="181.39" width="7.70" height="7.62" fill="#00000a"/><rect x="628.20" y="211.67" width="7.70" height="7.62" fill="#00000f"/><rect x="628.20" y="294.94" width="7.70" height="7.62" fill="#00000e"/><rect x="628.20" y="310.08" width="7.70" height="7.62" fill="#000011"/><rect x="628.20" y="363.07" width="7.70" height="7.62" fill="#000008"/><rect x="628.20" y="378.21" width="7.70" height="7.62" fill="#00000f"/><rect x="628.20" y="385.78" width="7.70" height="7.62" fill="#00000e"/><rect x="628.20" y="393.35" width="7.70" height="7.62" fill="#00000d"/><rect x="628.20" y="423.63" width="7.70" height="7.62" fill="#00000d"/></svg>
<div style="position:absolute;left:229px;top:256px;width:401px;height:1px;background:#f4f4f4;"></div>
<div style="position:absolute;left:390px;top:63.90px;width:2px;height:10.5px;background:#e4e4e4"></div>
<div style="position:absolute;left:390px;top:268.50px;width:2px;height:10.5px;background:#e4e4e4"></div>
<div style="position:absolute;left:390px;top:85.20px;width:2px;height:10.5px;background:#e4e4e4"></div>
<div style="position:absolute;left:390px;top:289.80px;width:2px;height:10.5px;background:#e4e4e4"></div>
<div style="position:absolute;left:390px;top:106.50px;width:2px;height:10.5px;background:#e4e4e4"></div>
<div style="position:absolute;left:390px;top:311.10px;width:2px;height:10.5px;background:#e4e4e4"></div>
<div style="position:absolute;left:390px;top:127.80px;width:2px;height:10.5px;background:#e4e4e4"></div>
<div style="position:absolute;left:390px;top:332.40px;width:2px;height:10.5px;background:#e4e4e4"></div>
<div style="position:absolute;left:390px;top:149.10px;width:2px;height:10.5px;background:#e4e4e4"></div>
<div style="position:absolute;left:390px;top:353.70px;width:2px;height:10.5px;background:#e4e4e4"></div>
<div style="position:absolute;left:390px;top:170.40px;width:2px;height:10.5px;background:#e4e4e4"></div>
<div style="position:absolute;left:390px;top:375.00px;width:2px;height:10.5px;background:#e4e4e4"></div>
<div style="position:absolute;left:390px;top:191.70px;width:2px;height:10.5px;background:#e4e4e4"></div>
<div style="position:absolute;left:390px;top:396.30px;width:2px;height:10.5px;background:#e4e4e4"></div>
<div style="position:absolute;left:390px;top:213.00px;width:2px;height:10.5px;background:#e4e4e4"></div>
<div style="position:absolute;left:390px;top:417.60px;width:2px;height:10.5px;background:#e4e4e4"></div>
<div style="position:absolute;left:390px;top:234.30px;width:2px;height:10.5px;background:#e4e4e4"></div>
<div style="position:absolute;left:390px;top:438.90px;width:2px;height:10.5px;background:#e4e4e4"></div>
<span id="t_57" style="position:absolute;white-space:pre;line-height:11px;font-family:'Liberation Sans',sans-serif;font-size:11px;font-weight:normal;color:#e01818;top:453.69px;left:236.00px;transform:scaleX(1.0291);transform-origin:left;overflow:hidden;">TOO FEW PIXELS ILLUMINATED. DECREASE CA</span>
<span id="t_58" style="position:absolute;white-space:pre;line-height:11px;font-family:'Liberation Sans',sans-serif;font-size:11px;font-weight:normal;color:#e8e8e8;top:453.69px;left:497.00px;transform:scaleX(0.9739);transform-origin:left;">USB2</span>
<span id="t_59" style="position:absolute;white-space:pre;line-height:11px;font-family:'Liberation Sans',sans-serif;font-size:11px;font-weight:normal;color:#e01818;top:453.69px;left:526.00px;transform:scaleX(1.0082);transform-origin:left;">: BLOCK SIZE</span>
<span id="t_60" style="position:absolute;white-space:pre;line-height:11px;font-family:'Liberation Sans',sans-serif;font-size:11px;font-weight:normal;color:#e8e8e8;top:464.19px;left:363.60px;transform:scaleX(0.9859);transform-origin:left;">Baseline: 1.50 %</span>
<span id="t_61" style="position:absolute;white-space:pre;line-height:11px;font-family:'Liberation Sans',sans-serif;font-size:11px;font-weight:normal;color:#e8e8e8;top:474.69px;left:363.60px;transform:scaleX(1.0504);transform-origin:left;">Frames averaged: 0</span>
<span id="t_62" style="position:absolute;white-space:pre;line-height:11px;font-family:'Liberation Sans',sans-serif;font-size:11px;font-weight:normal;color:#e8e8e8;top:474.69px;left:236.00px;transform:scaleX(0.9560);transform-origin:left;">3.5 FPS</span>
<span id="t_63" style="position:absolute;white-space:pre;line-height:11px;font-family:'Liberation Sans',sans-serif;font-size:11px;font-weight:normal;color:#e8e8e8;top:464.19px;left:497.40px;transform:scaleX(0.9885);transform-origin:left;">Baseline STD:  0.15 %</span>
<span id="t_64" style="position:absolute;white-space:pre;line-height:11px;font-family:'Liberation Sans',sans-serif;font-size:11px;font-weight:normal;color:#e8e8e8;top:474.69px;left:497.40px;transform:scaleX(1.0148);transform-origin:left;">ADC Offset: -212 DNs</span>
<div style="position:absolute;left:630px;top:54px;width:361px;height:342px;background:#b4b4b4;"></div>
<svg style="position:absolute;left:630px;top:54px" width="361" height="342" viewBox="0 0 361 342"><path d="M69.2 121.2H270.4L375 274V274H0V221Z" fill="#02030a"/></svg>
<div style="position:absolute;left:789.5px;top:166px;width:1.5px;height:58px;background:linear-gradient(to bottom,#c8d040 0%,#c0d050 15%,#90a880 25%,#50c070 45%,#40b060 65%,#2a8a90 80%,#104860 100%)"></div>
<div style="position:absolute;left:630px;top:396px;width:361px;height:22px;background:#ffffff;"></div>
<span id="t_65" style="position:absolute;white-space:pre;line-height:11px;font-family:'Liberation Sans',sans-serif;font-size:11px;font-weight:normal;color:#333;top:394.99px;left:636.00px;transform:scaleX(1.0443);transform-origin:left;">Relative Power: 0.00</span>
<span id="t_66" style="position:absolute;white-space:pre;line-height:11px;font-family:'Liberation Sans',sans-serif;font-size:11px;font-weight:normal;color:#333;top:394.99px;left:778.00px;transform:scaleX(1.0020);transform-origin:left;">Full Range = 2</span>
<div style="position:absolute;left:634px;top:406px;width:357px;height:10px;border:1px solid #555;border-right:none;background:#fff;box-shadow:inset 1px 1px 0 #a0a0a0"></div>
<div style="position:absolute;left:630px;top:418px;width:361px;height:1px;background:#c0c0c0;"></div>
<div style="position:absolute;left:630px;top:419px;width:361px;height:20px;background:#c0f8c0;"></div>
<span id="t_67" style="position:absolute;white-space:pre;line-height:11px;font-family:'Liberation Sans',sans-serif;font-size:11px;font-weight:bold;color:#111;top:420.69px;left:637.00px;transform:scaleX(0.9544);transform-origin:left;">(Trigger off) delay = 0.000 ms</span>
<div style="position:absolute;left:630px;top:439px;width:361px;height:22px;background:#c0c0f8;"></div>
<span id="t_68" style="position:absolute;white-space:pre;line-height:11px;font-family:'Liberation Sans',sans-serif;font-size:11px;font-weight:bold;color:#111;top:443.09px;left:639.00px;transform:scaleX(0.9518);transform-origin:left;">Imager Gain = 1.0</span>
<div style="position:absolute;left:630px;top:461px;width:361px;height:25px;background:#c0f8c0;"></div>
<span id="t_69" style="position:absolute;white-space:pre;line-height:11px;font-family:'Liberation Sans',sans-serif;font-size:11px;font-weight:bold;color:#111;top:464.89px;left:640.00px;transform:scaleX(0.9494);transform-origin:left;">Exposure time = 15.70 ms</span>
<div style="position:absolute;left:634px;top:433px;width:357px;height:5px;background:#f4f4f4;"></div>
<div style="position:absolute;left:634px;top:433px;width:12px;height:5px;border-right:1px solid #808080;border-bottom:1px solid #808080;background:#f0f0f0"></div>
<div style="position:absolute;left:640px;top:435px;width:1px;height:1px;background:#222;"></div>
<div style="position:absolute;left:634px;top:455px;width:357px;height:5px;background:#f4f4f4;"></div>
<div style="position:absolute;left:634px;top:455px;width:12px;height:5px;border-right:1px solid #808080;border-bottom:1px solid #808080;background:#f0f0f0"></div>
<div style="position:absolute;left:640px;top:457px;width:1px;height:1px;background:#222;"></div>
<div style="position:absolute;left:634px;top:477px;width:357px;height:5px;background:#f4f4f4;"></div>
<div style="position:absolute;left:634px;top:477px;width:12px;height:5px;border-right:1px solid #808080;border-bottom:1px solid #808080;background:#f0f0f0"></div>
<div style="position:absolute;left:640px;top:479px;width:1px;height:1px;background:#222;"></div>
<div style="position:absolute;left:647px;top:433px;width:13px;height:5px;border-right:1px solid #808080;border-bottom:1px solid #808080;border-left:1px solid #a0a0a0;background:#f0f0f0"></div>
<div style="position:absolute;left:647px;top:455px;width:13px;height:5px;border-right:1px solid #808080;border-bottom:1px solid #808080;border-left:1px solid #a0a0a0;background:#f0f0f0"></div>
<div style="position:absolute;left:973px;top:455px;width:12px;height:5px;border-right:1px solid #808080;border-bottom:1px solid #808080;background:#f0f0f0"></div>
<div style="position:absolute;left:979px;top:457px;width:1px;height:1px;background:#222;"></div>
<div style="position:absolute;left:973px;top:477px;width:12px;height:5px;border-right:1px solid #808080;border-bottom:1px solid #808080;background:#f0f0f0"></div>
<div style="position:absolute;left:979px;top:479px;width:1px;height:1px;background:#222;"></div>
<div style="position:absolute;left:809px;top:477px;width:13px;height:5px;border-right:1px solid #808080;border-bottom:1px solid #808080;border-left:1px solid #fff;background:#f0f0f0"></div>
<div style="position:absolute;left:630px;top:486px;width:361px;height:1px;background:#444;"></div>
<div style="position:absolute;left:0px;top:486px;width:991px;height:186px;background:#a0a0a0;"></div>
<div style="position:absolute;left:1px;top:486px;width:990px;height:1px;background:#1a1a1a;"></div>
<div class="sbtn" style="left:2px;top:487px;width:493px;height:12px"></div>
<div class="sbtn" style="left:2px;top:500px;width:493px;height:13px"></div>
<div class="sbtn" style="left:2px;top:514px;width:493px;height:13px"></div>
<div style="position:absolute;left:1px;top:499px;width:495px;height:1px;background:#1a1a1a;"></div>
<div style="position:absolute;left:1px;top:513px;width:495px;height:1px;background:#1a1a1a;"></div>
<div style="position:absolute;left:1px;top:527px;width:495px;height:1px;background:#1a1a1a;"></div>
<div style="position:absolute;left:1px;top:486px;width:1px;height:186px;background:#1a1a1a;"></div>
<span id="t_70" style="position:absolute;white-space:pre;line-height:9px;font-family:'Liberation Sans',sans-serif;font-size:9px;font-weight:bold;color:#111;top:489.98px;left:26.20px;transform:scaleX(0.9994);transform-origin:left;">2Wua @ 4Sigma</span>
<span id="t_71" style="position:absolute;white-space:pre;line-height:9px;font-family:'Liberation Sans',sans-serif;font-size:9px;font-weight:bold;color:#111;top:489.98px;left:319.30px;transform:translateX(-50%) ;transform-origin:center;">79.6 um</span>
<span id="t_72" style="position:absolute;white-space:pre;line-height:9px;font-family:'Liberation Sans',sans-serif;font-size:9px;font-weight:bold;color:#111;top:504.18px;left:26.20px;transform:scaleX(0.9646);transform-origin:left;">2Wub @ 13.5 %</span>
<span id="t_73" style="position:absolute;white-space:pre;line-height:9px;font-family:'Liberation Sans',sans-serif;font-size:9px;font-weight:bold;color:#111;top:504.18px;left:319.30px;transform:translateX(-50%) ;transform-origin:center;">78.3 um</span>
<span id="t_74" style="position:absolute;white-space:pre;line-height:9px;font-family:'Liberation Sans',sans-serif;font-size:9px;font-weight:bold;color:#111;top:517.88px;left:13.60px;transform:scaleX(0.9444);transform-origin:left;">GFit</span>
<span id="t_75" style="position:absolute;white-space:pre;line-height:9px;font-family:'Liberation Sans',sans-serif;font-size:9px;font-weight:bold;color:#111;top:517.88px;right:1040.50px;">97.9%</span>
<div style="position:absolute;left:248px;top:514px;width:2px;height:14px;background:#111;"></div>
<span id="t_76" style="position:absolute;white-space:pre;line-height:9px;font-family:'Liberation Sans',sans-serif;font-size:9px;font-weight:bold;color:#111;top:517.88px;left:261.00px;transform:scaleX(0.9602);transform-origin:left;">G_2W</span>
<span id="t_77" style="position:absolute;white-space:pre;line-height:9px;font-family:'Liberation Sans',sans-serif;font-size:9px;font-weight:bold;color:#111;top:517.88px;right:793.50px;">78.2 um</span>
<div style="position:absolute;left:2px;top:528px;width:494px;height:134px;background:#fffff0;"></div>
<div style="position:absolute;left:2px;top:528px;width:494px;height:2px;background:#80f040;"></div>
<svg style="position:absolute;left:0;top:0" width="1284" height="689" viewBox="0 0 1284 689" shape-rendering="crispEdges"><rect x="51.0" y="529" width="1" height="127" fill="#a8dc50"/><rect x="100.2" y="529" width="1" height="127" fill="#a8dc50"/><rect x="149.3" y="529" width="1" height="127" fill="#a8dc50"/><rect x="198.5" y="529" width="1" height="127" fill="#a8dc50"/><rect x="247.7" y="529" width="1" height="127" fill="#a8dc50"/><rect x="296.9" y="529" width="1" height="127" fill="#a8dc50"/><rect x="346.1" y="529" width="1" height="127" fill="#a8dc50"/><rect x="395.2" y="529" width="1" height="127" fill="#a8dc50"/><rect x="444.4" y="529" width="1" height="127" fill="#a8dc50"/><rect x="2" y="540.6" width="493" height="1" fill="#c8e890"/><rect x="2" y="553.4" width="493" height="1" fill="#c8e890"/><rect x="2" y="566.1" width="493" height="1" fill="#c8e890"/><rect x="2" y="578.9" width="493" height="1" fill="#c8e890"/><rect x="2" y="591.6" width="493" height="1" fill="#c8e890"/><rect x="2" y="604.4" width="493" height="1" fill="#c8e890"/><rect x="2" y="617.1" width="493" height="1" fill="#c8e890"/><rect x="2" y="629.9" width="493" height="1" fill="#c8e890"/><rect x="2" y="642.6" width="493" height="1" fill="#c8e890"/><rect x="2" y="639" width="493" height="1.2" fill="#1e6ed0"/><rect x="2" y="654.4" width="493" height="2.2" fill="#80e828"/><path d="M62 655.5H234.0L234.8 648L236.0 529V655.5H430" fill="none" stroke="#6a1820" stroke-width="1.1" shape-rendering="auto"/><rect x="430" y="654.8" width="7" height="1.5" fill="#181010"/><path d="M237.5 529V655.5" stroke="#6a1820" stroke-width="1"/></svg>
<span id="t_78" style="position:absolute;white-space:pre;line-height:11px;font-family:'Liberation Sans',sans-serif;font-size:11px;font-weight:normal;color:#3088c8;top:627.49px;left:450.90px;transform:scaleX(0.9196);transform-origin:left;">= 13.5%</span>
<div style="position:absolute;left:2px;top:661px;width:494px;height:1px;background:#404040;"></div>
<div style="position:absolute;left:2px;top:662px;width:494px;height:10px;background:#fffff0;"></div>
<div style="position:absolute;left:249px;top:662px;width:1px;height:10px;background:#a0a0a0;"></div>
<span id="t_79" style="position:absolute;white-space:pre;line-height:11px;font-family:'Liberation Sans',sans-serif;font-size:11px;font-weight:normal;color:#111;top:661.49px;left:4.40px;transform:scaleX(0.9949);transform-origin:left;">Scale = 1500.0 um/div</span>
<span id="t_80" style="position:absolute;white-space:pre;line-height:11px;font-family:'Liberation Sans',sans-serif;font-size:11px;font-weight:normal;color:#111;top:661.49px;left:251.60px;transform:scaleX(0.9176);transform-origin:left;">Peak = 77.5 %,  B = 1.5 %</span>
<div class="sbtn" style="left:497px;top:487px;width:493px;height:12px"></div>
<div class="sbtn" style="left:497px;top:500px;width:493px;height:13px"></div>
<div class="sbtn" style="left:497px;top:514px;width:493px;height:13px"></div>
<div style="position:absolute;left:496px;top:499px;width:495px;height:1px;background:#1a1a1a;"></div>
<div style="position:absolute;left:496px;top:513px;width:495px;height:1px;background:#1a1a1a;"></div>
<div style="position:absolute;left:496px;top:527px;width:495px;height:1px;background:#1a1a1a;"></div>
<div style="position:absolute;left:496px;top:486px;width:1px;height:186px;background:#1a1a1a;"></div>
<span id="t_81" style="position:absolute;white-space:pre;line-height:9px;font-family:'Liberation Sans',sans-serif;font-size:9px;font-weight:bold;color:#111;top:489.98px;left:521.20px;transform:scaleX(1.0041);transform-origin:left;">2Wva @ 4Sigma</span>
<span id="t_82" style="position:absolute;white-space:pre;line-height:9px;font-family:'Liberation Sans',sans-serif;font-size:9px;font-weight:bold;color:#111;top:489.98px;left:814.30px;transform:translateX(-50%) ;transform-origin:center;">84.4 um</span>
<span id="t_83" style="position:absolute;white-space:pre;line-height:9px;font-family:'Liberation Sans',sans-serif;font-size:9px;font-weight:bold;color:#111;top:504.18px;left:521.20px;transform:scaleX(0.9694);transform-origin:left;">2Wvb @ 13.5 %</span>
<span id="t_84" style="position:absolute;white-space:pre;line-height:9px;font-family:'Liberation Sans',sans-serif;font-size:9px;font-weight:bold;color:#111;top:504.18px;left:814.30px;transform:translateX(-50%) ;transform-origin:center;">80.7 um</span>
<span id="t_85" style="position:absolute;white-space:pre;line-height:9px;font-family:'Liberation Sans',sans-serif;font-size:9px;font-weight:bold;color:#111;top:517.88px;left:508.60px;transform:scaleX(0.9444);transform-origin:left;">GFit</span>
<span id="t_86" style="position:absolute;white-space:pre;line-height:9px;font-family:'Liberation Sans',sans-serif;font-size:9px;font-weight:bold;color:#111;top:517.88px;right:545.50px;">95.8%</span>
<div style="position:absolute;left:743px;top:514px;width:2px;height:14px;background:#111;"></div>
<span id="t_87" style="position:absolute;white-space:pre;line-height:9px;font-family:'Liberation Sans',sans-serif;font-size:9px;font-weight:bold;color:#111;top:517.88px;left:756.00px;transform:scaleX(0.9602);transform-origin:left;">G_2W</span>
<span id="t_88" style="position:absolute;white-space:pre;line-height:9px;font-family:'Liberation Sans',sans-serif;font-size:9px;font-weight:bold;color:#111;top:517.88px;right:298.50px;">81.3 um</span>
<div style="position:absolute;left:497px;top:528px;width:494px;height:134px;background:#fffff0;"></div>
<div style="position:absolute;left:497px;top:528px;width:494px;height:2px;background:#80f040;"></div>
<svg style="position:absolute;left:0;top:0" width="1284" height="689" viewBox="0 0 1284 689" shape-rendering="crispEdges"><rect x="546.0" y="529" width="1" height="127" fill="#a8dc50"/><rect x="595.2" y="529" width="1" height="127" fill="#a8dc50"/><rect x="644.3" y="529" width="1" height="127" fill="#a8dc50"/><rect x="693.5" y="529" width="1" height="127" fill="#a8dc50"/><rect x="742.7" y="529" width="1" height="127" fill="#a8dc50"/><rect x="791.9" y="529" width="1" height="127" fill="#a8dc50"/><rect x="841.1" y="529" width="1" height="127" fill="#a8dc50"/><rect x="890.2" y="529" width="1" height="127" fill="#a8dc50"/><rect x="939.4" y="529" width="1" height="127" fill="#a8dc50"/><rect x="497" y="540.6" width="493" height="1" fill="#c8e890"/><rect x="497" y="553.4" width="493" height="1" fill="#c8e890"/><rect x="497" y="566.1" width="493" height="1" fill="#c8e890"/><rect x="497" y="578.9" width="493" height="1" fill="#c8e890"/><rect x="497" y="591.6" width="493" height="1" fill="#c8e890"/><rect x="497" y="604.4" width="493" height="1" fill="#c8e890"/><rect x="497" y="617.1" width="493" height="1" fill="#c8e890"/><rect x="497" y="629.9" width="493" height="1" fill="#c8e890"/><rect x="497" y="642.6" width="493" height="1" fill="#c8e890"/><rect x="497" y="639" width="493" height="1.2" fill="#1e6ed0"/><rect x="497" y="654.4" width="493" height="2.2" fill="#80e828"/><path d="M557 655.5H738.3L739.1 648L740.3 529V655.5H925" fill="none" stroke="#6a1820" stroke-width="1.1" shape-rendering="auto"/><rect x="925" y="654.8" width="7" height="1.5" fill="#181010"/><path d="M741.8 529V655.5" stroke="#6a1820" stroke-width="1"/></svg>
<span id="t_89" style="position:absolute;white-space:pre;line-height:11px;font-family:'Liberation Sans',sans-serif;font-size:11px;font-weight:normal;color:#3088c8;top:627.49px;left:945.90px;transform:scaleX(0.9196);transform-origin:left;">= 13.5%</span>
<div style="position:absolute;left:497px;top:661px;width:494px;height:1px;background:#404040;"></div>
<div style="position:absolute;left:497px;top:662px;width:494px;height:10px;background:#fffff0;"></div>
<div style="position:absolute;left:744px;top:662px;width:1px;height:10px;background:#a0a0a0;"></div>
<span id="t_90" style="position:absolute;white-space:pre;line-height:11px;font-family:'Liberation Sans',sans-serif;font-size:11px;font-weight:normal;color:#111;top:661.49px;left:499.40px;transform:scaleX(0.9949);transform-origin:left;">Scale = 1500.0 um/div</span>
<span id="t_91" style="position:absolute;white-space:pre;line-height:11px;font-family:'Liberation Sans',sans-serif;font-size:11px;font-weight:normal;color:#111;top:661.49px;left:746.60px;transform:scaleX(0.9176);transform-origin:left;">Peak = 74.6 %,  B = 1.5 %</span>
<div style="position:absolute;left:990px;top:486px;width:1px;height:186px;background:#404040;"></div>
<div style="position:absolute;left:0px;top:672px;width:1284px;height:17px;background:#f0f0f0;"></div>
<div style="position:absolute;left:0px;top:672px;width:1284px;height:1px;background:#d8d8d8;"></div>
<span id="t_92" style="position:absolute;white-space:pre;line-height:11px;font-family:'Liberation Sans',sans-serif;font-size:11px;font-weight:normal;color:#222;top:676.69px;left:2.00px;transform:scaleX(0.9523);transform-origin:left;">Image area</span>
<div style="position:absolute;left:1184px;top:675px;width:23px;height:14px;border-top:1px solid #a0a0a0;border-left:1px solid #a0a0a0;"></div>
<div style="position:absolute;left:1209px;top:675px;width:29px;height:14px;border-top:1px solid #a0a0a0;border-left:1px solid #a0a0a0;"></div>
<div style="position:absolute;left:1240px;top:675px;width:28px;height:14px;border-top:1px solid #a0a0a0;border-left:1px solid #a0a0a0;"></div>
<span id="t_93" style="position:absolute;white-space:pre;line-height:11px;font-family:'Liberation Sans',sans-serif;font-size:11px;font-weight:normal;color:#222;top:676.69px;left:1241.60px;transform:scaleX(0.8315);transform-origin:left;">SCRL</span>
<svg style="position:absolute;left:1272px;top:677px" width="12" height="12" viewBox="0 0 12 12"><path d="M11 3L3 11M11 7L7 11" stroke="#a0a0a0" stroke-width="1"/></svg>
<div style="position:absolute;left:1283px;top:54px;width:1px;height:618px;background:#e0e0e0;"></div>
<div style="position:absolute;left:918px;top:0px;width:238px;height:454px;background:#f0f0f0;border:1px solid #a8a8a8;box-shadow:2px 3px 6px rgba(0,0,0,0.25)"></div>
<div style="position:absolute;left:919px;top:0px;width:236px;height:25px;background:#ffffff;"></div>
<svg style="position:absolute;left:925px;top:7px" width="13" height="11" viewBox="0 0 13 11"><rect x="0.5" y="0.5" width="12" height="10" fill="#e8f0f0" stroke="#90a0a0"/><rect x="2" y="2" width="5" height="7" fill="#306878"/><rect x="8" y="2" width="3" height="7" fill="#c0d0d0"/></svg>
<span id="t_94" style="position:absolute;white-space:pre;line-height:10.5px;font-family:'Liberation Sans',sans-serif;font-size:10.5px;font-weight:normal;color:#a4a4a4;top:7.71px;left:942.00px;transform:scaleX(1.0040);transform-origin:left;">Beam Wander</span>
<div style="position:absolute;left:1052px;top:12px;width:9px;height:1px;background:#a8a8a8;"></div>
<div style="position:absolute;left:1091px;top:9px;width:8px;height:8px;border:1px solid #e0e0e0"></div>
<svg style="position:absolute;left:1130px;top:9px" width="9" height="9" viewBox="0 0 9 9"><path d="M0.5 0.5L8.5 8.5M8.5 0.5L0.5 8.5" stroke="#909090" stroke-width="1"/></svg>
<svg style="position:absolute;left:919px;top:25px" width="235" height="236" viewBox="919 25 235 236"><rect x="919" y="25" width="235" height="235" fill="#00ff00"/><rect x="919" y="259" width="235" height="1" fill="#30a030"/><rect x="919" y="25" width="235" height="1" fill="#404040"/><rect x="919" y="25" width="1" height="235" fill="#208a20"/><circle cx="1037.2" cy="143.3" r="117.3" fill="none" stroke="#2a5a2a" stroke-width="0.8"/><path d="M919 143.5H1154M1037.5 25V261" stroke="#204a20" stroke-width="1"/><path d="M918.5 141.5V146M1035 24.5H1040M930.4 141.5V146M1035 36.4H1040M942.3 141.5V146M1035 48.3H1040M954.2 141.5V146M1035 60.2H1040M966.1 141.5V146M1035 72.1H1040M978.0 141.5V146M1035 84.0H1040M989.9 141.5V146M1035 95.9H1040M1001.8 141.5V146M1035 107.8H1040M1013.7 141.5V146M1035 119.7H1040M1025.6 141.5V146M1035 131.6H1040M1049.4 141.5V146M1035 155.4H1040M1061.3 141.5V146M1035 167.3H1040M1073.2 141.5V146M1035 179.2H1040M1085.1 141.5V146M1035 191.1H1040M1097.0 141.5V146M1035 203.0H1040M1108.9 141.5V146M1035 214.9H1040M1120.8 141.5V146M1035 226.8H1040M1132.7 141.5V146M1035 238.7H1040M1144.6 141.5V146M1035 250.6H1040M1156.5 141.5V146M1035 262.5H1040" stroke="#204a20" stroke-width="1"/><g fill="#b81c1c" stroke="#2a0808" stroke-width="0.8"><circle cx="1038.3" cy="133.7" r="1.7"/><circle cx="1038.5" cy="126.1" r="1.7"/><circle cx="1035.4" cy="127.0" r="1.7"/><circle cx="1044.8" cy="132.9" r="1.7"/><circle cx="1044.4" cy="131.3" r="1.7"/><circle cx="1041.3" cy="130.7" r="1.7"/><circle cx="1031.5" cy="136.9" r="1.7"/><circle cx="1041.9" cy="133.6" r="1.7"/><circle cx="1035.7" cy="124.7" r="1.7"/><circle cx="1040.9" cy="128.6" r="1.7"/><circle cx="1041.7" cy="123.1" r="1.7"/><circle cx="1041.0" cy="132.6" r="1.7"/><circle cx="1036.3" cy="144.8" r="1.7"/><circle cx="1042.2" cy="140.0" r="1.7"/><circle cx="1037.0" cy="122.2" r="1.7"/><circle cx="1038.0" cy="128.0" r="1.7"/><circle cx="1042.5" cy="131.3" r="1.7"/><circle cx="1037.7" cy="120.2" r="1.7"/><circle cx="1037.0" cy="140.2" r="1.7"/><circle cx="1035.7" cy="131.3" r="1.7"/><circle cx="1041.1" cy="115.3" r="1.7"/><circle cx="1039.7" cy="141.0" r="1.7"/><circle cx="1030.7" cy="126.0" r="1.7"/><circle cx="1039.1" cy="121.5" r="1.7"/><circle cx="1041.7" cy="128.4" r="1.7"/><circle cx="1032.5" cy="136.6" r="1.7"/><circle cx="1042.7" cy="137.7" r="1.7"/><circle cx="1046.4" cy="132.3" r="1.7"/><circle cx="1040.0" cy="117.0" r="1.7"/><circle cx="1042.1" cy="123.4" r="1.7"/><circle cx="1037.8" cy="117.4" r="1.7"/><circle cx="1035.4" cy="124.1" r="1.7"/><circle cx="1032.7" cy="131.2" r="1.7"/><circle cx="1046.4" cy="134.3" r="1.7"/><circle cx="1041.0" cy="122.2" r="1.7"/><circle cx="1034.1" cy="138.0" r="1.7"/><circle cx="1044.6" cy="130.4" r="1.7"/><circle cx="1040.7" cy="133.0" r="1.7"/><circle cx="1047.2" cy="134.7" r="1.7"/><circle cx="1042.0" cy="134.0" r="1.7"/><circle cx="1032.0" cy="140.8" r="1.7"/><circle cx="1044.1" cy="133.9" r="1.7"/><circle cx="1031.3" cy="123.2" r="1.7"/><circle cx="1042.4" cy="112.3" r="1.7"/><circle cx="1038.6" cy="138.4" r="1.7"/><circle cx="1033.2" cy="143.8" r="1.7"/><circle cx="1042.0" cy="127.6" r="1.7"/><circle cx="1041.1" cy="135.0" r="1.7"/><circle cx="1040.1" cy="139.5" r="1.7"/><circle cx="1036.7" cy="125.2" r="1.7"/><circle cx="1044.2" cy="129.2" r="1.7"/><circle cx="1035.3" cy="137.7" r="1.7"/><circle cx="1045.8" cy="124.9" r="1.7"/><circle cx="1033.3" cy="127.8" r="1.7"/><circle cx="1038.8" cy="126.3" r="1.7"/><circle cx="1045.0" cy="119.6" r="1.7"/><circle cx="1044.3" cy="117.3" r="1.7"/><circle cx="1035.7" cy="134.8" r="1.7"/><circle cx="1044.9" cy="136.9" r="1.7"/><circle cx="1041.1" cy="130.3" r="1.7"/><circle cx="1040.2" cy="134.3" r="1.7"/><circle cx="1038.7" cy="131.6" r="1.7"/><circle cx="1042.1" cy="129.0" r="1.7"/><circle cx="1043.2" cy="134.2" r="1.7"/><circle cx="1049.0" cy="132.0" r="1.7"/><circle cx="1037.7" cy="125.6" r="1.7"/><circle cx="1039.4" cy="137.5" r="1.7"/><circle cx="1037.9" cy="132.5" r="1.7"/><circle cx="1034.2" cy="131.2" r="1.7"/><circle cx="1041.4" cy="131.2" r="1.7"/><circle cx="1037.4" cy="135.0" r="1.7"/><circle cx="1040.7" cy="124.2" r="1.7"/><circle cx="1037.0" cy="128.1" r="1.7"/><circle cx="1038.5" cy="128.4" r="1.7"/><circle cx="1043.4" cy="118.2" r="1.7"/><circle cx="1039.2" cy="137.8" r="1.7"/><circle cx="1043.6" cy="142.7" r="1.7"/><circle cx="1032.1" cy="125.7" r="1.7"/><circle cx="1037.9" cy="134.7" r="1.7"/><circle cx="1043.5" cy="115.7" r="1.7"/><circle cx="1042.0" cy="115.3" r="1.7"/><circle cx="1040.3" cy="140.0" r="1.7"/><circle cx="1038.8" cy="130.8" r="1.7"/><circle cx="1043.2" cy="130.3" r="1.7"/><circle cx="1039.1" cy="143.1" r="1.7"/><circle cx="1044.1" cy="126.3" r="1.7"/><circle cx="1043.5" cy="126.6" r="1.7"/><circle cx="1040.1" cy="135.5" r="1.7"/><circle cx="1040.6" cy="134.9" r="1.7"/><circle cx="1033.9" cy="115.1" r="1.7"/><circle cx="1041.9" cy="120.1" r="1.7"/><circle cx="1035.7" cy="115.5" r="1.7"/><circle cx="1045.6" cy="135.9" r="1.7"/><circle cx="1045.4" cy="120.4" r="1.7"/><circle cx="1039.5" cy="118.5" r="1.7"/><circle cx="1043.2" cy="143.6" r="1.7"/><circle cx="1035.2" cy="143.4" r="1.7"/><circle cx="1043.9" cy="127.4" r="1.7"/><circle cx="1039.1" cy="123.5" r="1.7"/><circle cx="1041.4" cy="132.8" r="1.7"/><circle cx="1045.4" cy="119.6" r="1.7"/><circle cx="1045.0" cy="142.7" r="1.7"/><circle cx="1045.9" cy="127.3" r="1.7"/><circle cx="1035.9" cy="138.4" r="1.7"/><circle cx="1040.0" cy="130.1" r="1.7"/><circle cx="1045.8" cy="126.6" r="1.7"/><circle cx="1030.6" cy="136.5" r="1.7"/><circle cx="1040.8" cy="123.4" r="1.7"/><circle cx="1039.5" cy="136.7" r="1.7"/><circle cx="1039.9" cy="141.2" r="1.7"/><circle cx="1039.2" cy="138.6" r="1.7"/><circle cx="1046.7" cy="143.8" r="1.7"/><circle cx="1036.3" cy="137.1" r="1.7"/><circle cx="1032.2" cy="119.0" r="1.7"/><circle cx="1030.1" cy="138.8" r="1.7"/><circle cx="1033.9" cy="128.9" r="1.7"/><circle cx="1038.6" cy="128.7" r="1.7"/><circle cx="1036.7" cy="131.1" r="1.7"/><circle cx="1047.7" cy="129.4" r="1.7"/><circle cx="1042.0" cy="138.2" r="1.7"/><circle cx="1038.7" cy="117.4" r="1.7"/><circle cx="1036.8" cy="138.9" r="1.7"/><circle cx="1032.6" cy="123.5" r="1.7"/><circle cx="1044.3" cy="136.3" r="1.7"/><circle cx="1039.5" cy="136.4" r="1.7"/><circle cx="1040.1" cy="118.2" r="1.7"/><circle cx="1033.0" cy="123.1" r="1.7"/><circle cx="1043.4" cy="123.8" r="1.7"/><circle cx="1035.8" cy="121.9" r="1.7"/><circle cx="1032.6" cy="127.9" r="1.7"/><circle cx="1033.9" cy="132.4" r="1.7"/><circle cx="1037.3" cy="111.1" r="1.7"/><circle cx="1042.7" cy="126.5" r="1.7"/><circle cx="1040.7" cy="124.8" r="1.7"/><circle cx="1043.2" cy="135.9" r="1.7"/><circle cx="1042.7" cy="132.0" r="1.7"/><circle cx="1045.9" cy="135.1" r="1.7"/><circle cx="1041.0" cy="109.8" r="1.7"/><circle cx="1043.8" cy="141.0" r="1.7"/><circle cx="1038.2" cy="124.7" r="1.7"/><circle cx="1035.0" cy="135.3" r="1.7"/><circle cx="1047.9" cy="127.9" r="1.7"/><circle cx="1042.2" cy="137.3" r="1.7"/><circle cx="1035.4" cy="128.2" r="1.7"/><circle cx="1040.9" cy="136.6" r="1.7"/><circle cx="1039.3" cy="127.2" r="1.7"/><circle cx="1035.1" cy="125.7" r="1.7"/><circle cx="1043.6" cy="129.9" r="1.7"/><circle cx="1036.0" cy="121.3" r="1.7"/><circle cx="1042.5" cy="133.4" r="1.7"/><circle cx="1047.6" cy="132.9" r="1.7"/><circle cx="1039.2" cy="133.8" r="1.7"/><circle cx="1030.2" cy="138.5" r="1.7"/><circle cx="1040.8" cy="122.5" r="1.7"/><circle cx="1033.7" cy="122.9" r="1.7"/><circle cx="1040.9" cy="130.7" r="1.7"/><circle cx="1037.9" cy="120.0" r="1.7"/><circle cx="1035.0" cy="116.6" r="1.7"/><circle cx="1047.7" cy="138.1" r="1.7"/><circle cx="1048.2" cy="136.5" r="1.7"/><circle cx="1035.4" cy="131.4" r="1.7"/><circle cx="1039.2" cy="133.8" r="1.7"/><circle cx="1036.2" cy="127.9" r="1.7"/><circle cx="1041.7" cy="132.5" r="1.7"/><circle cx="1042.5" cy="130.9" r="1.7"/><circle cx="1037.9" cy="136.3" r="1.7"/><circle cx="1039.7" cy="121.4" r="1.7"/><circle cx="1036.7" cy="129.0" r="1.7"/><circle cx="1039.0" cy="130.4" r="1.7"/><circle cx="1039.5" cy="130.6" r="1.7"/><circle cx="1039.0" cy="117.4" r="1.7"/><circle cx="1041.5" cy="138.7" r="1.7"/><circle cx="1041.4" cy="127.3" r="1.7"/><circle cx="1041.3" cy="120.1" r="1.7"/><circle cx="1030.8" cy="129.5" r="1.7"/><circle cx="1035.0" cy="135.8" r="1.7"/><circle cx="1034.5" cy="143.5" r="1.7"/><circle cx="1038.1" cy="116.4" r="1.7"/><circle cx="1035.8" cy="133.8" r="1.7"/><circle cx="1041.8" cy="130.6" r="1.7"/><circle cx="1046.6" cy="135.5" r="1.7"/><circle cx="1039.4" cy="134.5" r="1.7"/><circle cx="1047.4" cy="137.9" r="1.7"/><circle cx="1043.5" cy="119.0" r="1.7"/><circle cx="1038.8" cy="135.7" r="1.7"/><circle cx="1038.1" cy="138.8" r="1.7"/><circle cx="1042.4" cy="137.4" r="1.7"/><circle cx="1045.0" cy="127.0" r="1.7"/><circle cx="1037.9" cy="137.0" r="1.7"/><circle cx="1044.0" cy="129.1" r="1.7"/><circle cx="1034.1" cy="130.7" r="1.7"/><circle cx="1041.2" cy="139.4" r="1.7"/><circle cx="1043.1" cy="129.2" r="1.7"/><circle cx="1043.6" cy="134.0" r="1.7"/><circle cx="1040.4" cy="129.5" r="1.7"/><circle cx="1038.3" cy="135.3" r="1.7"/><circle cx="1035.1" cy="123.2" r="1.7"/><circle cx="1039.5" cy="115.5" r="1.7"/><circle cx="1038.0" cy="110.5" r="1.7"/><circle cx="1036.2" cy="134.2" r="1.7"/><circle cx="1042.1" cy="128.5" r="1.7"/><circle cx="1038.6" cy="116.0" r="1.7"/><circle cx="1048.3" cy="133.7" r="1.7"/><circle cx="1043.9" cy="120.9" r="1.7"/><circle cx="1038.9" cy="112.3" r="1.7"/><circle cx="1043.2" cy="137.6" r="1.7"/><circle cx="1030.9" cy="128.5" r="1.7"/><circle cx="1041.7" cy="112.8" r="1.7"/><circle cx="1032.3" cy="119.2" r="1.7"/><circle cx="1037.2" cy="116.1" r="1.7"/><circle cx="1039.6" cy="131.3" r="1.7"/><circle cx="1042.5" cy="135.5" r="1.7"/><circle cx="1046.7" cy="139.7" r="1.7"/><circle cx="1033.9" cy="124.4" r="1.7"/><circle cx="1035.4" cy="119.1" r="1.7"/><circle cx="1039.1" cy="129.1" r="1.7"/><circle cx="1041.3" cy="114.4" r="1.7"/><circle cx="1033.9" cy="128.8" r="1.7"/><circle cx="1038.6" cy="126.1" r="1.7"/><circle cx="1039.2" cy="122.0" r="1.7"/><circle cx="1042.8" cy="132.3" r="1.7"/><circle cx="1039.1" cy="122.8" r="1.7"/><circle cx="1035.0" cy="129.3" r="1.7"/><circle cx="1032.5" cy="130.8" r="1.7"/><circle cx="1040.1" cy="116.3" r="1.7"/><circle cx="1038.4" cy="126.1" r="1.7"/><circle cx="1041.7" cy="134.6" r="1.7"/><circle cx="1039.4" cy="121.2" r="1.7"/><circle cx="1038.8" cy="128.4" r="1.7"/><circle cx="1043.0" cy="131.7" r="1.7"/><circle cx="1036.8" cy="116.5" r="1.7"/><circle cx="1038.0" cy="122.2" r="1.7"/><circle cx="1034.5" cy="127.9" r="1.7"/><circle cx="1037.2" cy="130.0" r="1.7"/><circle cx="1041.8" cy="125.2" r="1.7"/><circle cx="1044.6" cy="130.1" r="1.7"/><circle cx="1036.0" cy="131.3" r="1.7"/><circle cx="1041.0" cy="140.8" r="1.7"/><circle cx="1043.2" cy="137.7" r="1.7"/><circle cx="1041.8" cy="127.6" r="1.7"/><circle cx="1041.5" cy="119.1" r="1.7"/><circle cx="1044.2" cy="119.6" r="1.7"/><circle cx="1040.7" cy="148.5" r="1.7"/><circle cx="1038.5" cy="129.2" r="1.7"/><circle cx="1044.8" cy="129.2" r="1.7"/><circle cx="1035.7" cy="131.4" r="1.7"/><circle cx="1042.3" cy="135.5" r="1.7"/><circle cx="1035.8" cy="145.1" r="1.7"/><circle cx="1047.1" cy="129.2" r="1.7"/><circle cx="1040.7" cy="125.1" r="1.7"/><circle cx="1045.3" cy="122.5" r="1.7"/><circle cx="1042.4" cy="124.6" r="1.7"/><circle cx="1036.2" cy="135.6" r="1.7"/><circle cx="1045.6" cy="128.9" r="1.7"/><circle cx="1036.2" cy="136.5" r="1.7"/><circle cx="1039.3" cy="131.9" r="1.7"/><circle cx="1046.8" cy="139.4" r="1.7"/><circle cx="1039.5" cy="136.2" r="1.7"/><circle cx="1036.6" cy="128.6" r="1.7"/><circle cx="1044.7" cy="117.8" r="1.7"/><circle cx="1034.1" cy="114.1" r="1.7"/><circle cx="1044.5" cy="124.8" r="1.7"/><circle cx="1039.2" cy="126.1" r="1.7"/><circle cx="1039.0" cy="119.0" r="1.7"/><circle cx="1039.6" cy="115.8" r="1.7"/><circle cx="1039.2" cy="131.8" r="1.7"/><circle cx="1041.6" cy="126.9" r="1.7"/><circle cx="1035.3" cy="130.5" r="1.7"/><circle cx="1037.2" cy="143.4" r="1.7"/><circle cx="1042.9" cy="127.9" r="1.7"/><circle cx="1037.6" cy="122.5" r="1.7"/><circle cx="1035.4" cy="125.8" r="1.7"/><circle cx="1040.9" cy="133.7" r="1.7"/><circle cx="1042.2" cy="148.3" r="1.7"/><circle cx="1036.3" cy="129.1" r="1.7"/><circle cx="1037.1" cy="130.6" r="1.7"/><circle cx="1040.2" cy="132.8" r="1.7"/><circle cx="1038.4" cy="132.4" r="1.7"/><circle cx="1039.8" cy="136.1" r="1.7"/><circle cx="1031.9" cy="120.9" r="1.7"/><circle cx="1039.5" cy="119.5" r="1.7"/><circle cx="1034.5" cy="134.8" r="1.7"/><circle cx="1036.4" cy="134.8" r="1.7"/><circle cx="1043.0" cy="131.8" r="1.7"/><circle cx="1041.8" cy="128.0" r="1.7"/><circle cx="1033.1" cy="128.7" r="1.7"/><circle cx="1041.4" cy="124.1" r="1.7"/><circle cx="1039.0" cy="135.9" r="1.7"/><circle cx="1035.3" cy="134.9" r="1.7"/><circle cx="1047.4" cy="123.9" r="1.7"/><circle cx="1040.2" cy="127.6" r="1.7"/><circle cx="1046.8" cy="131.9" r="1.7"/><circle cx="1043.2" cy="122.7" r="1.7"/><circle cx="1039.4" cy="128.9" r="1.7"/><circle cx="1042.7" cy="112.9" r="1.7"/><circle cx="1042.8" cy="127.8" r="1.7"/><circle cx="1041.6" cy="132.4" r="1.7"/><circle cx="1032.9" cy="127.0" r="1.7"/><circle cx="1045.8" cy="123.7" r="1.7"/><circle cx="1035.7" cy="116.5" r="1.7"/><circle cx="1033.7" cy="132.1" r="1.7"/><circle cx="1047.6" cy="133.0" r="1.7"/><circle cx="1037.3" cy="122.8" r="1.7"/><circle cx="1042.0" cy="134.0" r="1.7"/><circle cx="1035.6" cy="118.2" r="1.7"/><circle cx="1040.9" cy="131.3" r="1.7"/><circle cx="1033.7" cy="127.1" r="1.7"/><circle cx="1036.9" cy="133.2" r="1.7"/><circle cx="1039.0" cy="128.2" r="1.7"/><circle cx="1037.8" cy="138.7" r="1.7"/><circle cx="1045.5" cy="125.6" r="1.7"/><circle cx="1043.0" cy="122.0" r="1.7"/><circle cx="1039.8" cy="135.9" r="1.7"/><circle cx="1046.0" cy="125.5" r="1.7"/><circle cx="1039.2" cy="130.8" r="1.7"/><circle cx="1032.7" cy="129.1" r="1.7"/><circle cx="1036.3" cy="132.4" r="1.7"/><circle cx="1039.7" cy="131.4" r="1.7"/><circle cx="1036.9" cy="137.2" r="1.7"/><circle cx="1038.4" cy="123.4" r="1.7"/><circle cx="1041.2" cy="114.6" r="1.7"/><circle cx="1036.4" cy="128.8" r="1.7"/><circle cx="1043.3" cy="127.5" r="1.7"/><circle cx="1040.8" cy="123.0" r="1.7"/><circle cx="1040.9" cy="144.3" r="1.7"/><circle cx="1036.6" cy="129.2" r="1.7"/><circle cx="1040.3" cy="138.4" r="1.7"/><circle cx="1042.4" cy="136.3" r="1.7"/><circle cx="1040.5" cy="131.3" r="1.7"/><circle cx="1043.9" cy="132.4" r="1.7"/><circle cx="1045.8" cy="117.6" r="1.7"/><circle cx="1043.0" cy="125.6" r="1.7"/><circle cx="1039.5" cy="126.7" r="1.7"/><circle cx="1037.5" cy="121.3" r="1.7"/><circle cx="1036.5" cy="134.9" r="1.7"/><circle cx="1039.7" cy="129.6" r="1.7"/><circle cx="1038.7" cy="137.4" r="1.7"/><circle cx="1041.7" cy="127.7" r="1.7"/><circle cx="1042.5" cy="127.6" r="1.7"/><circle cx="1034.0" cy="142.4" r="1.7"/><circle cx="1041.4" cy="120.2" r="1.7"/><circle cx="1044.6" cy="132.2" r="1.7"/><circle cx="1041.1" cy="137.2" r="1.7"/><circle cx="1040.4" cy="127.6" r="1.7"/><circle cx="1032.1" cy="137.9" r="1.7"/><circle cx="1039.6" cy="126.4" r="1.7"/><circle cx="1041.1" cy="129.7" r="1.7"/><circle cx="1042.4" cy="125.6" r="1.7"/><circle cx="1039.4" cy="109.3" r="1.7"/><circle cx="1037.5" cy="135.2" r="1.7"/><circle cx="1045.3" cy="125.7" r="1.7"/><circle cx="1038.9" cy="143.6" r="1.7"/><circle cx="1037.9" cy="135.8" r="1.7"/><circle cx="1047.2" cy="129.4" r="1.7"/><circle cx="1044.6" cy="122.5" r="1.7"/><circle cx="1040.4" cy="128.3" r="1.7"/><circle cx="1040.1" cy="139.4" r="1.7"/><circle cx="1036.7" cy="133.6" r="1.7"/><circle cx="1034.4" cy="133.6" r="1.7"/><circle cx="1042.0" cy="126.4" r="1.7"/><circle cx="1041.4" cy="114.7" r="1.7"/><circle cx="1042.3" cy="114.8" r="1.7"/><circle cx="1036.6" cy="123.9" r="1.7"/><circle cx="1037.6" cy="136.9" r="1.7"/><circle cx="1039.9" cy="125.3" r="1.7"/><circle cx="1042.1" cy="143.5" r="1.7"/><circle cx="1039.5" cy="132.4" r="1.7"/><circle cx="1045.3" cy="131.5" r="1.7"/><circle cx="1039.3" cy="132.8" r="1.7"/><circle cx="1044.1" cy="135.2" r="1.7"/><circle cx="1038.4" cy="119.3" r="1.7"/><circle cx="1040.0" cy="138.5" r="1.7"/><circle cx="1035.2" cy="119.5" r="1.7"/><circle cx="1039.4" cy="111.2" r="1.7"/><circle cx="1038.4" cy="125.0" r="1.7"/><circle cx="1041.4" cy="122.5" r="1.7"/><circle cx="1035.7" cy="125.4" r="1.7"/><circle cx="1039.3" cy="122.9" r="1.7"/><circle cx="1039.6" cy="135.9" r="1.7"/><circle cx="1045.2" cy="144.7" r="1.7"/><circle cx="1036.1" cy="125.1" r="1.7"/><circle cx="1036.2" cy="128.7" r="1.7"/><circle cx="1041.5" cy="116.5" r="1.7"/><circle cx="1041.6" cy="128.8" r="1.7"/><circle cx="1030.9" cy="131.7" r="1.7"/><circle cx="1043.6" cy="111.8" r="1.7"/><circle cx="1043.3" cy="130.9" r="1.7"/><circle cx="1041.8" cy="133.1" r="1.7"/><circle cx="1045.3" cy="126.9" r="1.7"/><circle cx="1043.3" cy="125.2" r="1.7"/><circle cx="1042.5" cy="121.5" r="1.7"/><circle cx="1039.0" cy="144.9" r="1.7"/><circle cx="1041.5" cy="127.5" r="1.7"/><circle cx="1034.8" cy="121.7" r="1.7"/><circle cx="1040.4" cy="137.6" r="1.7"/><circle cx="1041.5" cy="133.8" r="1.7"/><circle cx="1039.3" cy="141.4" r="1.7"/><circle cx="1037.9" cy="123.9" r="1.7"/><circle cx="1043.6" cy="129.6" r="1.7"/><circle cx="1038.3" cy="123.7" r="1.7"/><circle cx="1038.3" cy="134.7" r="1.7"/><circle cx="1040.9" cy="117.9" r="1.7"/><circle cx="1041.5" cy="130.6" r="1.7"/><circle cx="1034.7" cy="136.1" r="1.7"/><circle cx="1038.3" cy="125.9" r="1.7"/><circle cx="1043.3" cy="141.2" r="1.7"/><circle cx="1036.2" cy="133.0" r="1.7"/><circle cx="1037.1" cy="140.0" r="1.7"/><circle cx="1036.4" cy="136.5" r="1.7"/><circle cx="1037.4" cy="133.6" r="1.7"/><circle cx="1039.1" cy="122.9" r="1.7"/><circle cx="1049.4" cy="129.7" r="1.7"/><circle cx="1031.6" cy="136.9" r="1.7"/><circle cx="1031.2" cy="139.6" r="1.7"/><circle cx="1036.8" cy="130.3" r="1.7"/><circle cx="1045.3" cy="130.1" r="1.7"/><circle cx="1034.6" cy="113.4" r="1.7"/><circle cx="1045.2" cy="135.8" r="1.7"/><circle cx="1035.6" cy="136.9" r="1.7"/><circle cx="1041.9" cy="135.0" r="1.7"/><circle cx="1043.8" cy="135.7" r="1.7"/><circle cx="1040.3" cy="133.5" r="1.7"/><circle cx="1038.0" cy="129.3" r="1.7"/><circle cx="1043.3" cy="124.9" r="1.7"/><circle cx="1044.2" cy="121.8" r="1.7"/><circle cx="1040.6" cy="124.1" r="1.7"/><circle cx="1040.2" cy="122.6" r="1.7"/><circle cx="1031.8" cy="139.1" r="1.7"/><circle cx="1040.8" cy="123.9" r="1.7"/><circle cx="1040.5" cy="138.1" r="1.7"/><circle cx="1035.1" cy="128.0" r="1.7"/><circle cx="1042.1" cy="133.8" r="1.7"/><circle cx="1038.4" cy="109.6" r="1.7"/><circle cx="1045.4" cy="132.0" r="1.7"/><circle cx="1039.6" cy="126.4" r="1.7"/><circle cx="1040.6" cy="125.1" r="1.7"/><circle cx="1035.3" cy="122.2" r="1.7"/><circle cx="1037.0" cy="123.4" r="1.7"/><circle cx="1033.9" cy="134.9" r="1.7"/><circle cx="1033.2" cy="135.1" r="1.7"/><circle cx="1034.7" cy="132.2" r="1.7"/><circle cx="1045.9" cy="130.9" r="1.7"/><circle cx="1036.2" cy="129.4" r="1.7"/><circle cx="1040.0" cy="113.0" r="1.7"/><circle cx="1036.7" cy="130.5" r="1.7"/><circle cx="1037.3" cy="129.7" r="1.7"/><circle cx="1043.0" cy="136.1" r="1.7"/><circle cx="1043.8" cy="134.4" r="1.7"/><circle cx="1038.2" cy="128.8" r="1.7"/><circle cx="1038.3" cy="126.1" r="1.7"/><circle cx="1038.9" cy="113.1" r="1.7"/><circle cx="1038.0" cy="128.8" r="1.7"/><circle cx="1035.1" cy="128.8" r="1.7"/><circle cx="1041.8" cy="127.5" r="1.7"/><circle cx="1038.8" cy="112.2" r="1.7"/><circle cx="1041.8" cy="126.2" r="1.7"/><circle cx="1043.6" cy="132.4" r="1.7"/><circle cx="1039.6" cy="123.6" r="1.7"/><circle cx="1042.2" cy="124.5" r="1.7"/><circle cx="1040.4" cy="124.3" r="1.7"/><circle cx="1040.5" cy="135.9" r="1.7"/><circle cx="1035.5" cy="128.7" r="1.7"/><circle cx="1042.4" cy="130.3" r="1.7"/><circle cx="1036.4" cy="111.3" r="1.7"/><circle cx="1043.6" cy="143.1" r="1.7"/><circle cx="1043.9" cy="136.5" r="1.7"/><circle cx="1036.9" cy="122.4" r="1.7"/><circle cx="1043.1" cy="120.6" r="1.7"/><circle cx="1032.3" cy="119.8" r="1.7"/><circle cx="1036.7" cy="122.3" r="1.7"/><circle cx="1040.4" cy="122.1" r="1.7"/><circle cx="1045.4" cy="128.3" r="1.7"/><circle cx="1034.3" cy="141.0" r="1.7"/><circle cx="1036.8" cy="131.0" r="1.7"/><circle cx="1039.4" cy="126.1" r="1.7"/><circle cx="1040.8" cy="122.6" r="1.7"/><circle cx="1034.3" cy="122.0" r="1.7"/><circle cx="1039.4" cy="129.5" r="1.7"/><circle cx="1042.1" cy="130.1" r="1.7"/><circle cx="1036.2" cy="122.5" r="1.7"/><circle cx="1030.1" cy="127.4" r="1.7"/><circle cx="1041.8" cy="133.9" r="1.7"/><circle cx="1039.0" cy="127.4" r="1.7"/><circle cx="1043.8" cy="129.1" r="1.7"/><circle cx="1043.0" cy="134.4" r="1.7"/><circle cx="1040.5" cy="141.0" r="1.7"/><circle cx="1037.0" cy="125.7" r="1.7"/><circle cx="1036.2" cy="121.7" r="1.7"/><circle cx="1039.6" cy="134.2" r="1.7"/><circle cx="1045.1" cy="136.4" r="1.7"/><circle cx="1044.1" cy="117.4" r="1.7"/><circle cx="1036.4" cy="133.2" r="1.7"/><circle cx="1046.1" cy="130.0" r="1.7"/><circle cx="1035.8" cy="125.7" r="1.7"/><circle cx="1036.8" cy="121.1" r="1.7"/><circle cx="1045.8" cy="123.2" r="1.7"/><circle cx="1039.6" cy="148.9" r="1.7"/><circle cx="1045.1" cy="132.1" r="1.7"/><circle cx="1036.6" cy="132.8" r="1.7"/><circle cx="1047.3" cy="134.7" r="1.7"/><circle cx="1045.3" cy="129.9" r="1.7"/><circle cx="1041.8" cy="127.2" r="1.7"/><circle cx="1041.5" cy="141.0" r="1.7"/><circle cx="1033.0" cy="128.4" r="1.7"/><circle cx="1040.5" cy="123.7" r="1.7"/><circle cx="1038.0" cy="136.2" r="1.7"/><circle cx="1049.1" cy="134.8" r="1.7"/><circle cx="1040.7" cy="114.7" r="1.7"/><circle cx="1048.3" cy="129.7" r="1.7"/><circle cx="1039.4" cy="118.7" r="1.7"/><circle cx="1039.3" cy="118.9" r="1.7"/><circle cx="1039.8" cy="133.3" r="1.7"/><circle cx="1039.6" cy="131.6" r="1.7"/><circle cx="1035.4" cy="142.2" r="1.7"/><circle cx="1037.2" cy="112.3" r="1.7"/><circle cx="1038.7" cy="122.0" r="1.7"/><circle cx="1035.1" cy="125.7" r="1.7"/><circle cx="1040.6" cy="118.1" r="1.7"/><circle cx="1038.8" cy="142.1" r="1.7"/><circle cx="1042.5" cy="127.6" r="1.7"/><circle cx="1040.1" cy="127.9" r="1.7"/><circle cx="1039.3" cy="135.7" r="1.7"/><circle cx="1039.4" cy="120.8" r="1.7"/><circle cx="1042.2" cy="123.4" r="1.7"/><circle cx="1040.2" cy="149.0" r="1.7"/><circle cx="1035.4" cy="118.7" r="1.7"/><circle cx="1030.6" cy="132.4" r="1.7"/><circle cx="1037.3" cy="111.8" r="1.7"/><circle cx="1032.4" cy="134.7" r="1.7"/><circle cx="1036.1" cy="125.6" r="1.7"/><circle cx="1041.1" cy="141.5" r="1.7"/><circle cx="1048.8" cy="138.5" r="1.7"/><circle cx="1040.2" cy="130.7" r="1.7"/><circle cx="1038.0" cy="133.2" r="1.7"/><circle cx="1040.8" cy="129.5" r="1.7"/><circle cx="1037.6" cy="116.8" r="1.7"/><circle cx="1037.6" cy="114.8" r="1.7"/><circle cx="1045.4" cy="133.9" r="1.7"/><circle cx="1033.7" cy="141.8" r="1.7"/><circle cx="1042.5" cy="111.4" r="1.7"/><circle cx="1048.3" cy="136.5" r="1.7"/><circle cx="1042.0" cy="132.9" r="1.7"/><circle cx="1040.4" cy="130.6" r="1.7"/><circle cx="1043.4" cy="115.3" r="1.7"/><circle cx="1034.9" cy="116.2" r="1.7"/><circle cx="1037.2" cy="123.4" r="1.7"/><circle cx="1041.2" cy="131.5" r="1.7"/><circle cx="1039.6" cy="122.8" r="1.7"/><circle cx="1037.4" cy="137.8" r="1.7"/><circle cx="1043.0" cy="129.9" r="1.7"/><circle cx="1038.0" cy="143.3" r="1.7"/><circle cx="1036.6" cy="135.0" r="1.7"/><circle cx="1044.6" cy="126.6" r="1.7"/><circle cx="1042.7" cy="118.7" r="1.7"/><circle cx="1044.2" cy="130.8" r="1.7"/><circle cx="1031.9" cy="135.2" r="1.7"/><circle cx="1035.2" cy="140.8" r="1.7"/><circle cx="1036.5" cy="127.5" r="1.7"/><circle cx="1040.7" cy="125.9" r="1.7"/><circle cx="1040.6" cy="123.9" r="1.7"/><circle cx="1042.6" cy="129.1" r="1.7"/><circle cx="1044.8" cy="129.3" r="1.7"/><circle cx="1031.3" cy="129.9" r="1.7"/><circle cx="1041.7" cy="138.9" r="1.7"/><circle cx="1034.3" cy="143.2" r="1.7"/><circle cx="1038.8" cy="135.3" r="1.7"/><circle cx="1038.1" cy="118.7" r="1.7"/><circle cx="1044.8" cy="137.3" r="1.7"/><circle cx="1046.9" cy="136.9" r="1.7"/><circle cx="1037.5" cy="113.7" r="1.7"/><circle cx="1036.8" cy="122.8" r="1.7"/><circle cx="1035.6" cy="134.4" r="1.7"/><circle cx="1040.9" cy="126.5" r="1.7"/><circle cx="1040.3" cy="127.7" r="1.7"/><circle cx="1040.5" cy="135.9" r="1.7"/><circle cx="1043.5" cy="122.7" r="1.7"/><circle cx="1032.3" cy="142.1" r="1.7"/><circle cx="1040.0" cy="139.2" r="1.7"/><circle cx="1032.4" cy="126.0" r="1.7"/><circle cx="1039.6" cy="115.7" r="1.7"/><circle cx="1037.0" cy="135.7" r="1.7"/><circle cx="1044.7" cy="143.7" r="1.7"/><circle cx="1036.3" cy="116.1" r="1.7"/><circle cx="1042.0" cy="137.7" r="1.7"/><circle cx="1040.2" cy="117.0" r="1.7"/><circle cx="1043.3" cy="136.3" r="1.7"/><circle cx="1041.9" cy="124.5" r="1.7"/><circle cx="1041.0" cy="136.3" r="1.7"/><circle cx="1037.6" cy="112.0" r="1.7"/><circle cx="1041.1" cy="133.4" r="1.7"/><circle cx="1039.6" cy="137.2" r="1.7"/><circle cx="1036.9" cy="128.2" r="1.7"/><circle cx="1038.0" cy="134.3" r="1.7"/><circle cx="1046.5" cy="126.7" r="1.7"/><circle cx="1043.3" cy="134.4" r="1.7"/><circle cx="1047.4" cy="127.3" r="1.7"/><circle cx="1039.1" cy="119.2" r="1.7"/><circle cx="1041.8" cy="141.4" r="1.7"/><circle cx="1042.1" cy="132.9" r="1.7"/><circle cx="1038.6" cy="130.6" r="1.7"/><circle cx="1032.7" cy="138.6" r="1.7"/><circle cx="1037.9" cy="118.8" r="1.7"/><circle cx="1036.5" cy="121.4" r="1.7"/><circle cx="1043.6" cy="138.7" r="1.7"/><circle cx="1033.0" cy="137.5" r="1.7"/><circle cx="1043.2" cy="123.7" r="1.7"/><circle cx="1033.4" cy="122.1" r="1.7"/><circle cx="1036.5" cy="132.2" r="1.7"/><circle cx="1038.3" cy="110.3" r="1.7"/><circle cx="1040.4" cy="114.9" r="1.7"/><circle cx="1043.0" cy="117.9" r="1.7"/><circle cx="1036.7" cy="121.1" r="1.7"/><circle cx="1036.9" cy="140.9" r="1.7"/><circle cx="1043.6" cy="134.5" r="1.7"/><circle cx="1040.7" cy="114.8" r="1.7"/><circle cx="1037.3" cy="123.9" r="1.7"/><circle cx="1034.8" cy="133.7" r="1.7"/><circle cx="1036.4" cy="122.5" r="1.7"/><circle cx="1042.4" cy="141.2" r="1.7"/><circle cx="1040.2" cy="120.0" r="1.7"/><circle cx="1045.2" cy="131.7" r="1.7"/><circle cx="1044.0" cy="142.6" r="1.7"/><circle cx="1044.3" cy="124.9" r="1.7"/><circle cx="1044.6" cy="136.1" r="1.7"/><circle cx="1032.9" cy="125.3" r="1.7"/><circle cx="1033.1" cy="128.0" r="1.7"/><circle cx="1041.8" cy="119.2" r="1.7"/><circle cx="1041.3" cy="142.5" r="1.7"/><circle cx="1033.1" cy="138.8" r="1.7"/><circle cx="1038.5" cy="131.5" r="1.7"/><circle cx="1038.8" cy="138.2" r="1.7"/><circle cx="1044.3" cy="129.8" r="1.7"/><circle cx="1033.0" cy="135.8" r="1.7"/><circle cx="1037.2" cy="134.8" r="1.7"/><circle cx="1040.8" cy="143.9" r="1.7"/><circle cx="1044.4" cy="124.9" r="1.7"/><circle cx="1041.2" cy="145.2" r="1.7"/><circle cx="1036.9" cy="133.0" r="1.7"/><circle cx="1045.2" cy="140.6" r="1.7"/><circle cx="1041.5" cy="116.9" r="1.7"/><circle cx="1033.6" cy="131.3" r="1.7"/><circle cx="1035.4" cy="139.5" r="1.7"/><circle cx="1042.2" cy="113.6" r="1.7"/><circle cx="1035.7" cy="130.5" r="1.7"/><circle cx="1037.3" cy="127.6" r="1.7"/><circle cx="1041.4" cy="121.6" r="1.7"/><circle cx="1041.4" cy="123.1" r="1.7"/><circle cx="1036.9" cy="133.9" r="1.7"/><circle cx="1036.8" cy="131.6" r="1.7"/><circle cx="1046.8" cy="129.2" r="1.7"/><circle cx="1038.8" cy="135.8" r="1.7"/><circle cx="1037.7" cy="139.0" r="1.7"/><circle cx="1033.3" cy="134.7" r="1.7"/><circle cx="1037.4" cy="121.7" r="1.7"/><circle cx="1046.7" cy="121.2" r="1.7"/><circle cx="1047.9" cy="135.1" r="1.7"/><circle cx="1045.3" cy="120.0" r="1.7"/><circle cx="1045.3" cy="142.4" r="1.7"/><circle cx="1039.0" cy="127.8" r="1.7"/><circle cx="1037.7" cy="123.2" r="1.7"/><circle cx="1041.6" cy="132.0" r="1.7"/><circle cx="1040.4" cy="144.8" r="1.7"/><circle cx="1037.9" cy="133.4" r="1.7"/><circle cx="1045.3" cy="119.8" r="1.7"/><circle cx="1044.5" cy="145.9" r="1.7"/><circle cx="1034.2" cy="118.9" r="1.7"/><circle cx="1035.9" cy="112.0" r="1.7"/><circle cx="1041.1" cy="111.9" r="1.7"/><circle cx="1041.9" cy="142.4" r="1.7"/><circle cx="1032.5" cy="126.1" r="1.7"/><circle cx="1030.3" cy="136.2" r="1.7"/><circle cx="1036.3" cy="126.6" r="1.7"/><circle cx="1039.8" cy="134.0" r="1.7"/><circle cx="1037.9" cy="129.1" r="1.7"/><circle cx="1037.0" cy="130.1" r="1.7"/><circle cx="1034.1" cy="129.6" r="1.7"/><circle cx="1031.3" cy="124.5" r="1.7"/><circle cx="1048.3" cy="129.7" r="1.7"/><circle cx="1033.6" cy="131.4" r="1.7"/><circle cx="1036.0" cy="113.8" r="1.7"/><circle cx="1036.0" cy="135.8" r="1.7"/><circle cx="1041.2" cy="128.1" r="1.7"/><circle cx="1035.9" cy="119.1" r="1.7"/><circle cx="1045.8" cy="131.3" r="1.7"/><circle cx="1034.3" cy="128.3" r="1.7"/><circle cx="1040.4" cy="127.6" r="1.7"/><circle cx="1038.5" cy="116.4" r="1.7"/><circle cx="1034.5" cy="144.5" r="1.7"/><circle cx="1035.9" cy="136.8" r="1.7"/><circle cx="1032.1" cy="126.5" r="1.7"/><circle cx="1040.8" cy="138.5" r="1.7"/><circle cx="1034.1" cy="134.5" r="1.7"/><circle cx="1041.1" cy="122.2" r="1.7"/><circle cx="1041.4" cy="120.7" r="1.7"/><circle cx="1035.9" cy="128.8" r="1.7"/><circle cx="1035.8" cy="115.5" r="1.7"/><circle cx="1037.5" cy="136.0" r="1.7"/><circle cx="1037.6" cy="140.6" r="1.7"/><circle cx="1035.1" cy="116.9" r="1.7"/><circle cx="1046.9" cy="132.7" r="1.7"/><circle cx="1043.3" cy="121.4" r="1.7"/><circle cx="1043.3" cy="131.4" r="1.7"/><circle cx="1042.5" cy="129.2" r="1.7"/><circle cx="1044.5" cy="123.0" r="1.7"/><circle cx="1036.0" cy="115.4" r="1.7"/><circle cx="1044.3" cy="122.2" r="1.7"/><circle cx="1035.3" cy="120.4" r="1.7"/><circle cx="1037.8" cy="117.3" r="1.7"/><circle cx="1038.3" cy="123.2" r="1.7"/><circle cx="1037.3" cy="120.2" r="1.7"/><circle cx="1039.7" cy="124.8" r="1.7"/><circle cx="1040.0" cy="131.3" r="1.7"/><circle cx="1040.6" cy="108.9" r="1.7"/><circle cx="1037.3" cy="121.7" r="1.7"/><circle cx="1042.3" cy="114.5" r="1.7"/><circle cx="1036.4" cy="126.3" r="1.7"/><circle cx="1037.9" cy="138.1" r="1.7"/><circle cx="1037.4" cy="137.9" r="1.7"/><circle cx="1045.4" cy="133.0" r="1.7"/><circle cx="1041.8" cy="130.1" r="1.7"/><circle cx="1041.4" cy="117.8" r="1.7"/><circle cx="1043.5" cy="124.1" r="1.7"/><circle cx="1044.0" cy="129.8" r="1.7"/><circle cx="1044.5" cy="127.7" r="1.7"/><circle cx="1037.6" cy="131.2" r="1.7"/><circle cx="1037.7" cy="124.0" r="1.7"/><circle cx="1040.0" cy="130.3" r="1.7"/><circle cx="1046.4" cy="129.4" r="1.7"/><circle cx="1047.7" cy="138.8" r="1.7"/><circle cx="1040.1" cy="130.3" r="1.7"/><circle cx="1038.9" cy="122.3" r="1.7"/><circle cx="1039.2" cy="123.1" r="1.7"/><circle cx="1047.4" cy="133.9" r="1.7"/><circle cx="1038.0" cy="111.4" r="1.7"/><circle cx="1039.3" cy="125.2" r="1.7"/><circle cx="1035.3" cy="118.5" r="1.7"/><circle cx="1039.4" cy="127.6" r="1.7"/><circle cx="1046.2" cy="130.2" r="1.7"/><circle cx="1040.2" cy="125.6" r="1.7"/><circle cx="1036.6" cy="142.8" r="1.7"/><circle cx="1044.3" cy="144.8" r="1.7"/><circle cx="1037.9" cy="129.3" r="1.7"/><circle cx="1035.3" cy="137.9" r="1.7"/><circle cx="1032.8" cy="134.2" r="1.7"/><circle cx="1044.8" cy="142.0" r="1.7"/><circle cx="1035.0" cy="139.0" r="1.7"/><circle cx="1036.6" cy="122.0" r="1.7"/><circle cx="1033.1" cy="139.6" r="1.7"/><circle cx="1046.4" cy="123.5" r="1.7"/><circle cx="1036.2" cy="125.9" r="1.7"/><circle cx="1037.6" cy="112.5" r="1.7"/><circle cx="1036.3" cy="139.9" r="1.7"/><circle cx="1047.7" cy="126.5" r="1.7"/><circle cx="1036.6" cy="124.3" r="1.7"/><circle cx="1030.4" cy="137.4" r="1.7"/><circle cx="1034.3" cy="138.8" r="1.7"/><circle cx="1033.0" cy="117.3" r="1.7"/><circle cx="1040.7" cy="122.0" r="1.7"/><circle cx="1043.1" cy="129.1" r="1.7"/><circle cx="1033.9" cy="134.7" r="1.7"/><circle cx="1042.4" cy="111.4" r="1.7"/><circle cx="1048.3" cy="133.6" r="1.7"/><circle cx="1042.1" cy="111.9" r="1.7"/><circle cx="1036.4" cy="125.8" r="1.7"/><circle cx="1043.5" cy="115.6" r="1.7"/><circle cx="1036.5" cy="110.3" r="1.7"/><circle cx="1038.4" cy="132.2" r="1.7"/><circle cx="1032.4" cy="123.6" r="1.7"/><circle cx="1041.9" cy="143.6" r="1.7"/><circle cx="1042.4" cy="126.2" r="1.7"/><circle cx="1034.8" cy="120.4" r="1.7"/><circle cx="1036.4" cy="130.4" r="1.7"/><circle cx="1039.3" cy="144.3" r="1.7"/><circle cx="1040.6" cy="119.1" r="1.7"/><circle cx="1046.9" cy="137.7" r="1.7"/><circle cx="1039.9" cy="122.4" r="1.7"/><circle cx="1032.1" cy="119.6" r="1.7"/><circle cx="1043.2" cy="121.6" r="1.7"/><circle cx="1033.4" cy="130.8" r="1.7"/><circle cx="1040.7" cy="134.6" r="1.7"/><circle cx="1042.6" cy="142.0" r="1.7"/><circle cx="1035.5" cy="138.0" r="1.7"/><circle cx="1034.8" cy="135.4" r="1.7"/><circle cx="1040.3" cy="131.2" r="1.7"/><circle cx="1043.9" cy="128.8" r="1.7"/><circle cx="1044.8" cy="137.1" r="1.7"/><circle cx="1040.1" cy="123.8" r="1.7"/><circle cx="1036.3" cy="124.1" r="1.7"/><circle cx="1038.6" cy="128.8" r="1.7"/><circle cx="1042.6" cy="121.1" r="1.7"/><circle cx="1036.4" cy="126.1" r="1.7"/><circle cx="1040.3" cy="119.5" r="1.7"/><circle cx="1046.3" cy="123.8" r="1.7"/><circle cx="1039.5" cy="131.6" r="1.7"/><circle cx="1040.4" cy="134.5" r="1.7"/><circle cx="1040.8" cy="130.5" r="1.7"/><circle cx="1031.7" cy="122.4" r="1.7"/><circle cx="1040.9" cy="127.2" r="1.7"/><circle cx="1036.0" cy="123.6" r="1.7"/><circle cx="1039.2" cy="140.8" r="1.7"/><circle cx="1037.6" cy="121.0" r="1.7"/><circle cx="1036.9" cy="130.7" r="1.7"/><circle cx="1039.7" cy="131.5" r="1.7"/><circle cx="1039.3" cy="137.6" r="1.7"/><circle cx="1046.3" cy="117.6" r="1.7"/><circle cx="1040.2" cy="126.6" r="1.7"/><circle cx="1040.8" cy="114.9" r="1.7"/><circle cx="1041.9" cy="130.8" r="1.7"/><circle cx="1038.0" cy="122.1" r="1.7"/><circle cx="1033.8" cy="120.6" r="1.7"/><circle cx="1042.8" cy="134.0" r="1.7"/><circle cx="1039.4" cy="133.7" r="1.7"/><circle cx="1036.7" cy="129.7" r="1.7"/><circle cx="1039.7" cy="134.1" r="1.7"/><circle cx="1039.2" cy="127.7" r="1.7"/><circle cx="1038.9" cy="123.1" r="1.7"/><circle cx="1044.6" cy="114.7" r="1.7"/><circle cx="1042.8" cy="136.7" r="1.7"/><circle cx="1042.5" cy="118.2" r="1.7"/><circle cx="1035.4" cy="131.5" r="1.7"/><circle cx="1041.5" cy="119.6" r="1.7"/><circle cx="1037.8" cy="125.3" r="1.7"/><circle cx="1039.8" cy="132.1" r="1.7"/><circle cx="1038.4" cy="117.6" r="1.7"/><circle cx="1045.5" cy="143.7" r="1.7"/><circle cx="1039.0" cy="138.4" r="1.7"/><circle cx="1041.6" cy="135.1" r="1.7"/><circle cx="1041.5" cy="122.0" r="1.7"/><circle cx="1042.3" cy="138.3" r="1.7"/><circle cx="1035.2" cy="147.1" r="1.7"/><circle cx="1049.0" cy="135.8" r="1.7"/><circle cx="1038.1" cy="123.5" r="1.7"/><circle cx="1035.8" cy="130.1" r="1.7"/><circle cx="1039.3" cy="135.2" r="1.7"/><circle cx="1042.7" cy="133.4" r="1.7"/><circle cx="1040.7" cy="127.1" r="1.7"/><circle cx="1039.0" cy="121.4" r="1.7"/><circle cx="1040.3" cy="128.8" r="1.7"/><circle cx="1040.8" cy="121.1" r="1.7"/><circle cx="1039.7" cy="129.4" r="1.7"/><circle cx="1041.9" cy="119.2" r="1.7"/><circle cx="1041.5" cy="138.0" r="1.7"/><circle cx="1042.1" cy="125.6" r="1.7"/><circle cx="1037.3" cy="126.8" r="1.7"/><circle cx="1043.0" cy="143.3" r="1.7"/><circle cx="1038.8" cy="123.1" r="1.7"/><circle cx="1041.3" cy="130.9" r="1.7"/><circle cx="1035.8" cy="122.2" r="1.7"/><circle cx="1039.0" cy="135.2" r="1.7"/><circle cx="1034.8" cy="119.6" r="1.7"/><circle cx="1041.4" cy="117.7" r="1.7"/><circle cx="1040.0" cy="132.2" r="1.7"/><circle cx="1039.1" cy="119.6" r="1.7"/><circle cx="1039.2" cy="125.9" r="1.7"/><circle cx="1040.9" cy="121.3" r="1.7"/><circle cx="1043.4" cy="113.6" r="1.7"/><circle cx="1038.7" cy="129.1" r="1.7"/><circle cx="1043.5" cy="123.4" r="1.7"/><circle cx="1041.8" cy="123.8" r="1.7"/><circle cx="1043.0" cy="145.0" r="1.7"/><circle cx="1037.6" cy="133.1" r="1.7"/><circle cx="1035.0" cy="138.0" r="1.7"/><circle cx="1045.0" cy="129.3" r="1.7"/><circle cx="1034.1" cy="132.7" r="1.7"/><circle cx="1045.0" cy="139.0" r="1.7"/><circle cx="1042.3" cy="112.2" r="1.7"/><circle cx="1036.2" cy="142.1" r="1.7"/><circle cx="1033.6" cy="139.4" r="1.7"/><circle cx="1048.5" cy="136.0" r="1.7"/><circle cx="1044.4" cy="125.9" r="1.7"/><circle cx="1034.0" cy="128.1" r="1.7"/><circle cx="1038.6" cy="128.6" r="1.7"/><circle cx="1042.6" cy="127.7" r="1.7"/><circle cx="1040.4" cy="132.9" r="1.7"/><circle cx="1039.5" cy="146.0" r="1.7"/><circle cx="1041.5" cy="129.8" r="1.7"/><circle cx="1038.6" cy="123.2" r="1.7"/><circle cx="1045.7" cy="130.4" r="1.7"/><circle cx="1035.0" cy="123.8" r="1.7"/><circle cx="1038.9" cy="124.9" r="1.7"/><circle cx="1043.7" cy="118.3" r="1.7"/><circle cx="1041.8" cy="130.3" r="1.7"/><circle cx="1034.1" cy="129.4" r="1.7"/><circle cx="1039.0" cy="133.6" r="1.7"/><circle cx="1037.4" cy="131.8" r="1.7"/><circle cx="1033.0" cy="119.0" r="1.7"/><circle cx="1043.3" cy="138.6" r="1.7"/><circle cx="1039.4" cy="123.5" r="1.7"/><circle cx="1035.7" cy="135.2" r="1.7"/><circle cx="1042.1" cy="119.5" r="1.7"/><circle cx="1040.1" cy="120.8" r="1.7"/><circle cx="1039.8" cy="137.3" r="1.7"/><circle cx="1042.0" cy="109.9" r="1.7"/><circle cx="1042.2" cy="112.6" r="1.7"/><circle cx="1044.9" cy="132.7" r="1.7"/><circle cx="1039.5" cy="138.6" r="1.7"/><circle cx="1036.9" cy="122.5" r="1.7"/><circle cx="1037.8" cy="128.3" r="1.7"/><circle cx="1034.3" cy="133.5" r="1.7"/><circle cx="1042.0" cy="129.7" r="1.7"/><circle cx="1053.5" cy="132.5" r="1.8"/></g></svg>
<span id="t_95" style="position:absolute;white-space:pre;line-height:9.3px;font-family:'Liberation Sans',sans-serif;font-size:9.3px;font-weight:normal;color:#222;top:271.93px;left:925.50px;transform:scaleX(0.9694);transform-origin:left;">Darker points correspond to older data</span>
<span id="t_96" style="position:absolute;white-space:pre;line-height:9.3px;font-family:'Liberation Sans',sans-serif;font-size:9.3px;font-weight:normal;color:#222;top:281.93px;left:925.50px;transform:scaleX(0.9337);transform-origin:left;">Scale radius = 10 um</span>
<span id="t_97" style="position:absolute;white-space:pre;line-height:9.3px;font-family:'Liberation Sans',sans-serif;font-size:9.3px;font-weight:normal;color:#222;top:291.93px;left:925.50px;transform:scaleX(0.9452);transform-origin:left;">Samples taken = 7845</span>
<span id="t_98" style="position:absolute;white-space:pre;line-height:9.3px;font-family:'Liberation Sans',sans-serif;font-size:9.3px;font-weight:normal;color:#222;top:301.93px;left:925.50px;transform:scaleX(0.9254);transform-origin:left;">Max deviation = 3.1 um</span>
<span id="t_99" style="position:absolute;white-space:pre;line-height:9.3px;font-family:'Liberation Sans',sans-serif;font-size:9.3px;font-weight:normal;color:#222;top:311.93px;left:925.50px;transform:scaleX(0.9254);transform-origin:left;">Last deviation = 1.6 um</span>
<span id="t_100" style="position:absolute;white-space:pre;line-height:9.3px;font-family:'Liberation Sans',sans-serif;font-size:9.3px;font-weight:normal;color:#222;top:321.93px;left:925.50px;transform:scaleX(0.9072);transform-origin:left;">Mean = 0.9 um</span>
<span id="t_101" style="position:absolute;white-space:pre;line-height:9.3px;font-family:'Liberation Sans',sans-serif;font-size:9.3px;font-weight:normal;color:#222;top:331.93px;left:925.50px;transform:scaleX(0.8952);transform-origin:left;">RMS = 0.97 um (x=0.30 um y=0.92 um)</span>
<div style="position:absolute;left:925px;top:341px;width:222px;height:12px;background:#e8e8e8;border:1px solid #fff;border-right-color:#8a8a8a;border-bottom-color:#8a8a8a;box-shadow:inset -1px -1px 0 #c8c8c8"></div>
<span id="t_102" style="position:absolute;white-space:pre;line-height:9.3px;font-family:'Liberation Sans',sans-serif;font-size:9.3px;font-weight:normal;color:#222;top:342.83px;left:1036.00px;transform:translateX(-50%) scaleX(0.9500);transform-origin:center;">Time interval = 7.0 seconds</span>
<div style="position:absolute;left:925px;top:355px;width:222px;height:12px;background:#e8e8e8;border:1px solid #fff;border-right-color:#8a8a8a;border-bottom-color:#8a8a8a;box-shadow:inset -1px -1px 0 #c8c8c8"></div>
<span id="t_103" style="position:absolute;white-space:pre;line-height:9.3px;font-family:'Liberation Sans',sans-serif;font-size:9.3px;font-weight:normal;color:#222;top:356.83px;left:1036.00px;transform:translateX(-50%) scaleX(0.9500);transform-origin:center;">Samples to be recorded = 8192</span>
<div style="position:absolute;left:925px;top:368px;width:73px;height:12px;background:#e8e8e8;border:1px solid #fff;border-right-color:#8a8a8a;border-bottom-color:#8a8a8a;box-shadow:inset -1px -1px 0 #c8c8c8"></div>
<span id="t_104" style="position:absolute;white-space:pre;line-height:9.3px;font-family:'Liberation Sans',sans-serif;font-size:9.3px;font-weight:normal;color:#222;top:369.83px;left:961.50px;transform:translateX(-50%) scaleX(0.9500);transform-origin:center;">Clear</span>
<div style="position:absolute;left:1000px;top:368px;width:72px;height:12px;background:#e8e8e8;border:1px solid #fff;border-right-color:#8a8a8a;border-bottom-color:#8a8a8a;box-shadow:inset -1px -1px 0 #c8c8c8"></div>
<span id="t_105" style="position:absolute;white-space:pre;line-height:9.3px;font-family:'Liberation Sans',sans-serif;font-size:9.3px;font-weight:normal;color:#222;top:369.83px;left:1036.00px;transform:translateX(-50%) scaleX(0.9500);transform-origin:center;">Replay</span>
<div style="position:absolute;left:1074px;top:368px;width:72px;height:12px;background:#e8e8e8;border:1px solid #fff;border-right-color:#8a8a8a;border-bottom-color:#8a8a8a;box-shadow:inset -1px -1px 0 #c8c8c8"></div>
<span id="t_106" style="position:absolute;white-space:pre;line-height:9.3px;font-family:'Liberation Sans',sans-serif;font-size:9.3px;font-weight:normal;color:#222;top:369.83px;left:1110.00px;transform:translateX(-50%) scaleX(0.9500);transform-origin:center;">To ClipBoard</span>
<div style="position:absolute;left:925px;top:381px;width:73px;height:12px;background:#e8e8e8;border:1px solid #fff;border-right-color:#8a8a8a;border-bottom-color:#8a8a8a;box-shadow:inset -1px -1px 0 #c8c8c8"></div>
<span id="t_107" style="position:absolute;white-space:pre;line-height:9.3px;font-family:'Liberation Sans',sans-serif;font-size:9.3px;font-weight:normal;color:#222;top:382.83px;left:961.50px;transform:translateX(-50%) scaleX(0.9500);transform-origin:center;">Normalize</span>
<div style="position:absolute;left:1000px;top:381px;width:72px;height:12px;background:#e8e8e8;border:1px solid #fff;border-right-color:#8a8a8a;border-bottom-color:#8a8a8a;box-shadow:inset -1px -1px 0 #c8c8c8"></div>
<span id="t_108" style="position:absolute;white-space:pre;line-height:9.3px;font-family:'Liberation Sans',sans-serif;font-size:9.3px;font-weight:normal;color:#222;top:382.83px;left:1036.00px;transform:translateX(-50%) scaleX(0.9500);transform-origin:center;">Replay Fast</span>
<div style="position:absolute;left:1074px;top:381px;width:72px;height:12px;background:#e8e8e8;border:1px solid #fff;border-right-color:#8a8a8a;border-bottom-color:#8a8a8a;box-shadow:inset -1px -1px 0 #c8c8c8"></div>
<span id="t_109" style="position:absolute;white-space:pre;line-height:9.3px;font-family:'Liberation Sans',sans-serif;font-size:9.3px;font-weight:normal;color:#222;top:382.83px;left:1110.00px;transform:translateX(-50%) scaleX(0.9500);transform-origin:center;">Save as bitmap</span>
<div style="position:absolute;left:925px;top:395px;width:73px;height:12px;background:#e8e8e8;border:1px solid #fff;border-right-color:#8a8a8a;border-bottom-color:#8a8a8a;box-shadow:inset -1px -1px 0 #c8c8c8"></div>
<span id="t_110" style="position:absolute;white-space:pre;line-height:9.3px;font-family:'Liberation Sans',sans-serif;font-size:9.3px;font-weight:normal;color:#222;top:396.83px;left:961.50px;transform:translateX(-50%) scaleX(0.9500);transform-origin:center;">To Excel</span>
<div style="position:absolute;left:1000px;top:395px;width:72px;height:12px;background:#e8e8e8;border:1px solid #fff;border-right-color:#8a8a8a;border-bottom-color:#8a8a8a;box-shadow:inset -1px -1px 0 #c8c8c8"></div>
<span id="t_111" style="position:absolute;white-space:pre;line-height:9.3px;font-family:'Liberation Sans',sans-serif;font-size:9.3px;font-weight:normal;color:#222;top:396.83px;left:1036.00px;transform:translateX(-50%) scaleX(0.9500);transform-origin:center;">Sequence Off</span>
<div style="position:absolute;left:1074px;top:395px;width:72px;height:12px;background:#e8e8e8;border:1px solid #fff;border-right-color:#8a8a8a;border-bottom-color:#8a8a8a;box-shadow:inset -1px -1px 0 #c8c8c8"></div>
<span id="t_112" style="position:absolute;white-space:pre;line-height:9.3px;font-family:'Liberation Sans',sans-serif;font-size:9.3px;font-weight:normal;color:#222;top:396.83px;left:1110.00px;transform:translateX(-50%) scaleX(0.9500);transform-origin:center;">Export to Paint</span>
<div style="position:absolute;left:925px;top:408px;width:73px;height:12px;background:#e8e8e8;border:1px solid #fff;border-right-color:#8a8a8a;border-bottom-color:#8a8a8a;box-shadow:inset -1px -1px 0 #c8c8c8"></div>
<span id="t_113" style="position:absolute;white-space:pre;line-height:9.3px;font-family:'Liberation Sans',sans-serif;font-size:9.3px;font-weight:normal;color:#222;top:409.83px;left:961.50px;transform:translateX(-50%) scaleX(0.9500);transform-origin:center;">To CSV</span>
<div style="position:absolute;left:1000px;top:408px;width:72px;height:12px;background:#f4f4f4;border:1px solid #a0a0a0;border-right-color:#fff;border-bottom-color:#fff;box-shadow:inset 1px 1px 0 #808080"></div>
<span id="t_114" style="position:absolute;white-space:pre;line-height:9.3px;font-family:'Liberation Sans',sans-serif;font-size:9.3px;font-weight:normal;color:#222;top:409.83px;left:1036.00px;transform:translateX(-50%) scaleX(0.9500);transform-origin:center;">AutoScale</span>
<div style="position:absolute;left:1074px;top:408px;width:72px;height:12px;background:#e8e8e8;border:1px solid #fff;border-right-color:#8a8a8a;border-bottom-color:#8a8a8a;box-shadow:inset -1px -1px 0 #c8c8c8"></div>
<span id="t_115" style="position:absolute;white-space:pre;line-height:9.3px;font-family:'Liberation Sans',sans-serif;font-size:9.3px;font-weight:normal;color:#222;top:409.83px;left:1110.00px;transform:translateX(-50%) scaleX(0.9500);transform-origin:center;">Enter Radius</span>
</body></html>
